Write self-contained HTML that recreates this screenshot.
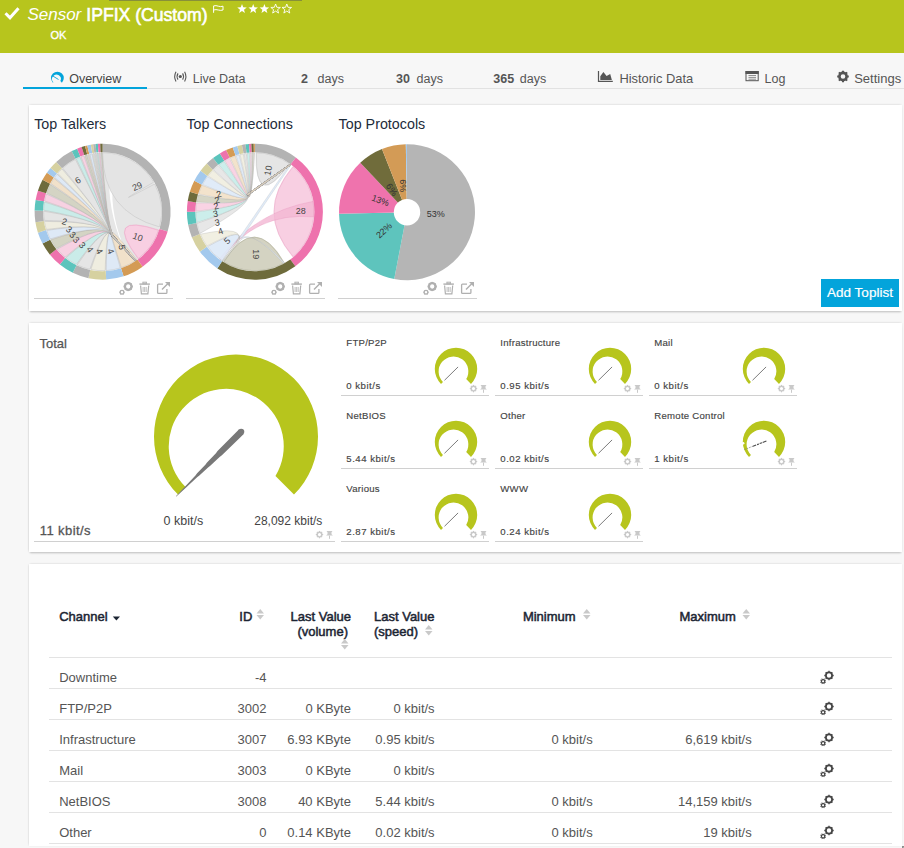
<!DOCTYPE html>
<html><head><meta charset="utf-8"><style>
html,body{margin:0;padding:0;}
body{width:904px;height:848px;overflow:hidden;position:relative;background:#f7f7f7;font-family:"Liberation Sans", sans-serif;}
.t{position:absolute;line-height:0;white-space:nowrap;}
svg{position:absolute;left:0;top:0;}
</style></head><body>
<div style="position:absolute;left:0px;top:0px;width:904px;height:53px;background:#b7c51d;"></div>
<div style="position:absolute;left:109px;top:0px;width:193px;height:1px;background:rgba(80,80,90,0.45);"></div>
<div class="t" style="left:27.40px;top:15.21px;font-size:17px;font-weight:normal;color:#fff;font-style:italic;">Sensor</div>
<div class="t" style="left:86.30px;top:15.00px;font-size:17.6px;font-weight:normal;color:#fff;font-style:normal;-webkit-text-stroke:0.6px #fff;">IPFIX (Custom)</div>
<div class="t" style="left:50.5px;top:35.4px;font-size:11px;color:#fff;-webkit-text-stroke:0.35px #fff;">OK</div>
<div style="position:absolute;left:23px;top:88px;width:881px;height:1px;background:#e2e2e2;"></div>
<div style="position:absolute;left:23px;top:87px;width:124px;height:2px;background:#03a4db;"></div>
<div class="t" style="left:69.20px;top:78.67px;font-size:12.5px;font-weight:normal;color:#444;font-style:normal;">Overview</div>
<div class="t" style="left:192.70px;top:78.67px;font-size:12.5px;font-weight:normal;color:#555;font-style:normal;">Live Data</div>
<div class="t" style="left:301.00px;top:78.67px;font-size:12.5px;font-weight:bold;color:#555;font-style:normal;">2</div>
<div class="t" style="left:317.50px;top:78.67px;font-size:12.5px;font-weight:normal;color:#555;font-style:normal;">days</div>
<div class="t" style="left:396.00px;top:78.67px;font-size:12.5px;font-weight:bold;color:#555;font-style:normal;">30</div>
<div class="t" style="left:416.50px;top:78.67px;font-size:12.5px;font-weight:normal;color:#555;font-style:normal;">days</div>
<div class="t" style="left:493.30px;top:78.67px;font-size:12.5px;font-weight:bold;color:#555;font-style:normal;">365</div>
<div class="t" style="left:519.80px;top:78.67px;font-size:12.5px;font-weight:normal;color:#555;font-style:normal;">days</div>
<div class="t" style="left:619.40px;top:78.53px;font-size:12.9px;font-weight:normal;color:#555;font-style:normal;">Historic Data</div>
<div class="t" style="left:764.60px;top:78.67px;font-size:12.5px;font-weight:normal;color:#555;font-style:normal;">Log</div>
<div class="t" style="left:854.20px;top:78.50px;font-size:13px;font-weight:normal;color:#555;font-style:normal;">Settings</div>
<div style="position:absolute;left:29px;top:105px;width:873px;height:206px;background:#fff;box-shadow:0 2px 2px -1px rgba(0,0,0,0.22), 0 -1px 2px -1px rgba(0,0,0,0.12), -1px 0 2px -1px rgba(0,0,0,0.15), 0 0 3px rgba(0,0,0,0.04);"></div>
<div style="position:absolute;left:29px;top:323px;width:873px;height:229px;background:#fff;box-shadow:0 2px 2px -1px rgba(0,0,0,0.22), 0 -1px 2px -1px rgba(0,0,0,0.12), -1px 0 2px -1px rgba(0,0,0,0.15), 0 0 3px rgba(0,0,0,0.04);"></div>
<div style="position:absolute;left:29px;top:564px;width:873px;height:282px;background:#fff;box-shadow:0 -1px 2px -1px rgba(0,0,0,0.12), -1px 0 2px -1px rgba(0,0,0,0.15), 0 0 2px rgba(0,0,0,0.03);"></div>
<div style="position:absolute;left:901.5px;top:845.5px;width:2px;height:2px;background:#6a6a6a;border-radius:1px;"></div>
<div style="position:absolute;left:903px;top:847px;width:1px;height:1px;background:#aaa;"></div>
<div class="t" style="left:34.20px;top:123.85px;font-size:14.3px;font-weight:normal;color:#1d2b3a;font-style:normal;">Top Talkers</div>
<div class="t" style="left:186.40px;top:123.85px;font-size:14.3px;font-weight:normal;color:#1d2b3a;font-style:normal;">Top Connections</div>
<div class="t" style="left:338.60px;top:123.85px;font-size:14.3px;font-weight:normal;color:#1d2b3a;font-style:normal;">Top Protocols</div>
<div style="position:absolute;left:34px;top:298px;width:139px;height:1px;background:#d0d0d0;"></div>
<div style="position:absolute;left:186px;top:298px;width:139px;height:1px;background:#d0d0d0;"></div>
<div style="position:absolute;left:338px;top:298px;width:139px;height:1px;background:#d0d0d0;"></div>
<div style="position:absolute;left:821px;top:279px;width:78px;height:28px;background:#03a4db;"></div>
<div class="t" style="left:560.00px;width:600px;text-align:center;top:292.82px;font-size:13.5px;font-weight:normal;color:#fff;font-style:normal;-webkit-text-stroke:0.2px #fff;">Add Toplist</div>
<div class="t" style="left:39.50px;top:343.70px;font-size:13px;font-weight:normal;color:#555;font-style:normal;-webkit-text-stroke:0.25px #555;">Total</div>
<div class="t" style="left:163.60px;top:521.17px;font-size:12.5px;font-weight:normal;color:#444;font-style:normal;">0 kbit/s</div>
<div class="t" style="left:-277.70px;width:600px;text-align:right;top:521.34px;font-size:12px;font-weight:normal;color:#444;font-style:normal;">28,092 kbit/s</div>
<div class="t" style="left:39.80px;top:530.50px;font-size:13px;font-weight:normal;color:#555;font-style:normal;letter-spacing:0.4px;-webkit-text-stroke:0.3px #555;">11 kbit/s</div>
<div style="position:absolute;left:34px;top:541px;width:301px;height:1px;background:#d0d0d0;"></div>
<div class="t" style="left:346.30px;top:342.67px;font-size:9.6px;font-weight:normal;color:#444;font-style:normal;letter-spacing:0.25px;-webkit-text-stroke:0.15px #444;">FTP/P2P</div>
<div class="t" style="left:346.30px;top:385.67px;font-size:9.6px;font-weight:normal;color:#444;font-style:normal;letter-spacing:0.5px;-webkit-text-stroke:0.15px #444;">0 kbit/s</div>
<div style="position:absolute;left:341px;top:395px;width:148px;height:1px;background:#d0d0d0;"></div>
<div class="t" style="left:500.30px;top:342.67px;font-size:9.6px;font-weight:normal;color:#444;font-style:normal;letter-spacing:0.25px;-webkit-text-stroke:0.15px #444;">Infrastructure</div>
<div class="t" style="left:500.30px;top:385.67px;font-size:9.6px;font-weight:normal;color:#444;font-style:normal;letter-spacing:0.5px;-webkit-text-stroke:0.15px #444;">0.95 kbit/s</div>
<div style="position:absolute;left:495px;top:395px;width:148px;height:1px;background:#d0d0d0;"></div>
<div class="t" style="left:654.30px;top:342.67px;font-size:9.6px;font-weight:normal;color:#444;font-style:normal;letter-spacing:0.25px;-webkit-text-stroke:0.15px #444;">Mail</div>
<div class="t" style="left:654.30px;top:385.67px;font-size:9.6px;font-weight:normal;color:#444;font-style:normal;letter-spacing:0.5px;-webkit-text-stroke:0.15px #444;">0 kbit/s</div>
<div style="position:absolute;left:649px;top:395px;width:148px;height:1px;background:#d0d0d0;"></div>
<div class="t" style="left:346.30px;top:415.67px;font-size:9.6px;font-weight:normal;color:#444;font-style:normal;letter-spacing:0.25px;-webkit-text-stroke:0.15px #444;">NetBIOS</div>
<div class="t" style="left:346.30px;top:458.67px;font-size:9.6px;font-weight:normal;color:#444;font-style:normal;letter-spacing:0.5px;-webkit-text-stroke:0.15px #444;">5.44 kbit/s</div>
<div style="position:absolute;left:341px;top:468px;width:148px;height:1px;background:#d0d0d0;"></div>
<div class="t" style="left:500.30px;top:415.67px;font-size:9.6px;font-weight:normal;color:#444;font-style:normal;letter-spacing:0.25px;-webkit-text-stroke:0.15px #444;">Other</div>
<div class="t" style="left:500.30px;top:458.67px;font-size:9.6px;font-weight:normal;color:#444;font-style:normal;letter-spacing:0.5px;-webkit-text-stroke:0.15px #444;">0.02 kbit/s</div>
<div style="position:absolute;left:495px;top:468px;width:148px;height:1px;background:#d0d0d0;"></div>
<div class="t" style="left:654.30px;top:415.67px;font-size:9.6px;font-weight:normal;color:#444;font-style:normal;letter-spacing:0.25px;-webkit-text-stroke:0.15px #444;">Remote Control</div>
<div class="t" style="left:654.30px;top:458.67px;font-size:9.6px;font-weight:normal;color:#444;font-style:normal;letter-spacing:0.5px;-webkit-text-stroke:0.15px #444;">1 kbit/s</div>
<div style="position:absolute;left:649px;top:468px;width:148px;height:1px;background:#d0d0d0;"></div>
<div class="t" style="left:346.30px;top:488.67px;font-size:9.6px;font-weight:normal;color:#444;font-style:normal;letter-spacing:0.25px;-webkit-text-stroke:0.15px #444;">Various</div>
<div class="t" style="left:346.30px;top:531.67px;font-size:9.6px;font-weight:normal;color:#444;font-style:normal;letter-spacing:0.5px;-webkit-text-stroke:0.15px #444;">2.87 kbit/s</div>
<div style="position:absolute;left:341px;top:541px;width:148px;height:1px;background:#d0d0d0;"></div>
<div class="t" style="left:500.30px;top:488.67px;font-size:9.6px;font-weight:normal;color:#444;font-style:normal;letter-spacing:0.25px;-webkit-text-stroke:0.15px #444;">WWW</div>
<div class="t" style="left:500.30px;top:531.67px;font-size:9.6px;font-weight:normal;color:#444;font-style:normal;letter-spacing:0.5px;-webkit-text-stroke:0.15px #444;">0.24 kbit/s</div>
<div style="position:absolute;left:495px;top:541px;width:148px;height:1px;background:#d0d0d0;"></div>
<div class="t" style="left:59.20px;top:616.90px;font-size:13px;font-weight:normal;color:#1c2533;font-style:normal;-webkit-text-stroke:0.5px #1c2533;">Channel</div>
<div class="t" style="left:239.30px;top:616.90px;font-size:13px;font-weight:normal;color:#1c2533;font-style:normal;-webkit-text-stroke:0.5px #1c2533;">ID</div>
<div class="t" style="left:-249.00px;width:600px;text-align:right;top:616.90px;font-size:13px;font-weight:normal;color:#1c2533;font-style:normal;-webkit-text-stroke:0.5px #1c2533;">Last Value</div>
<div class="t" style="left:-252.00px;width:600px;text-align:right;top:631.50px;font-size:13px;font-weight:normal;color:#1c2533;font-style:normal;-webkit-text-stroke:0.5px #1c2533;">(volume)</div>
<div class="t" style="left:374.00px;top:616.90px;font-size:13px;font-weight:normal;color:#1c2533;font-style:normal;-webkit-text-stroke:0.5px #1c2533;">Last Value</div>
<div class="t" style="left:374.00px;top:631.50px;font-size:13px;font-weight:normal;color:#1c2533;font-style:normal;-webkit-text-stroke:0.5px #1c2533;">(speed)</div>
<div class="t" style="left:522.90px;top:616.90px;font-size:13px;font-weight:normal;color:#1c2533;font-style:normal;-webkit-text-stroke:0.5px #1c2533;">Minimum</div>
<div class="t" style="left:679.50px;top:616.90px;font-size:13px;font-weight:normal;color:#1c2533;font-style:normal;-webkit-text-stroke:0.5px #1c2533;">Maximum</div>
<div style="position:absolute;left:49px;top:657px;width:843px;height:1px;background:#e3e3e3;"></div>
<div style="position:absolute;left:49px;top:688px;width:843px;height:1px;background:#e3e3e3;"></div>
<div style="position:absolute;left:49px;top:719px;width:843px;height:1px;background:#e3e3e3;"></div>
<div style="position:absolute;left:49px;top:750px;width:843px;height:1px;background:#e3e3e3;"></div>
<div style="position:absolute;left:49px;top:781px;width:843px;height:1px;background:#e3e3e3;"></div>
<div style="position:absolute;left:49px;top:812px;width:843px;height:1px;background:#e3e3e3;"></div>
<div style="position:absolute;left:49px;top:843px;width:843px;height:1px;background:#e3e3e3;"></div>
<div class="t" style="left:59.20px;top:677.70px;font-size:13px;font-weight:normal;color:#555;font-style:normal;">Downtime</div>
<div class="t" style="left:-333.50px;width:600px;text-align:right;top:677.70px;font-size:13px;font-weight:normal;color:#555;font-style:normal;">-4</div>
<div class="t" style="left:59.20px;top:708.70px;font-size:13px;font-weight:normal;color:#555;font-style:normal;">FTP/P2P</div>
<div class="t" style="left:-333.50px;width:600px;text-align:right;top:708.70px;font-size:13px;font-weight:normal;color:#555;font-style:normal;">3002</div>
<div class="t" style="left:-249.10px;width:600px;text-align:right;top:708.70px;font-size:13px;font-weight:normal;color:#555;font-style:normal;">0 KByte</div>
<div class="t" style="left:-165.40px;width:600px;text-align:right;top:708.70px;font-size:13px;font-weight:normal;color:#555;font-style:normal;">0 kbit/s</div>
<div class="t" style="left:59.20px;top:739.70px;font-size:13px;font-weight:normal;color:#555;font-style:normal;">Infrastructure</div>
<div class="t" style="left:-333.50px;width:600px;text-align:right;top:739.70px;font-size:13px;font-weight:normal;color:#555;font-style:normal;">3007</div>
<div class="t" style="left:-249.10px;width:600px;text-align:right;top:739.70px;font-size:13px;font-weight:normal;color:#555;font-style:normal;">6.93 KByte</div>
<div class="t" style="left:-165.40px;width:600px;text-align:right;top:739.70px;font-size:13px;font-weight:normal;color:#555;font-style:normal;">0.95 kbit/s</div>
<div class="t" style="left:-7.30px;width:600px;text-align:right;top:739.70px;font-size:13px;font-weight:normal;color:#555;font-style:normal;">0 kbit/s</div>
<div class="t" style="left:151.70px;width:600px;text-align:right;top:739.70px;font-size:13px;font-weight:normal;color:#555;font-style:normal;">6,619 kbit/s</div>
<div class="t" style="left:59.20px;top:770.70px;font-size:13px;font-weight:normal;color:#555;font-style:normal;">Mail</div>
<div class="t" style="left:-333.50px;width:600px;text-align:right;top:770.70px;font-size:13px;font-weight:normal;color:#555;font-style:normal;">3003</div>
<div class="t" style="left:-249.10px;width:600px;text-align:right;top:770.70px;font-size:13px;font-weight:normal;color:#555;font-style:normal;">0 KByte</div>
<div class="t" style="left:-165.40px;width:600px;text-align:right;top:770.70px;font-size:13px;font-weight:normal;color:#555;font-style:normal;">0 kbit/s</div>
<div class="t" style="left:59.20px;top:801.70px;font-size:13px;font-weight:normal;color:#555;font-style:normal;">NetBIOS</div>
<div class="t" style="left:-333.50px;width:600px;text-align:right;top:801.70px;font-size:13px;font-weight:normal;color:#555;font-style:normal;">3008</div>
<div class="t" style="left:-249.10px;width:600px;text-align:right;top:801.70px;font-size:13px;font-weight:normal;color:#555;font-style:normal;">40 KByte</div>
<div class="t" style="left:-165.40px;width:600px;text-align:right;top:801.70px;font-size:13px;font-weight:normal;color:#555;font-style:normal;">5.44 kbit/s</div>
<div class="t" style="left:-7.30px;width:600px;text-align:right;top:801.70px;font-size:13px;font-weight:normal;color:#555;font-style:normal;">0 kbit/s</div>
<div class="t" style="left:151.70px;width:600px;text-align:right;top:801.70px;font-size:13px;font-weight:normal;color:#555;font-style:normal;">14,159 kbit/s</div>
<div class="t" style="left:59.20px;top:832.70px;font-size:13px;font-weight:normal;color:#555;font-style:normal;">Other</div>
<div class="t" style="left:-333.50px;width:600px;text-align:right;top:832.70px;font-size:13px;font-weight:normal;color:#555;font-style:normal;">0</div>
<div class="t" style="left:-249.10px;width:600px;text-align:right;top:832.70px;font-size:13px;font-weight:normal;color:#555;font-style:normal;">0.14 KByte</div>
<div class="t" style="left:-165.40px;width:600px;text-align:right;top:832.70px;font-size:13px;font-weight:normal;color:#555;font-style:normal;">0.02 kbit/s</div>
<div class="t" style="left:-7.30px;width:600px;text-align:right;top:832.70px;font-size:13px;font-weight:normal;color:#555;font-style:normal;">0 kbit/s</div>
<div class="t" style="left:151.70px;width:600px;text-align:right;top:832.70px;font-size:13px;font-weight:normal;color:#555;font-style:normal;">19 kbit/s</div>
<svg width="904" height="848" viewBox="0 0 904 848">
<polyline points="5.5,13.2 10,17.8 18.5,8.3" fill="none" stroke="#fff" stroke-width="3"/>
<path d="M213.6,12.8 L213.6,5.9 Q216,5.2 218.3,6.2 Q220.6,7 223,6.2 L223,10 Q220.6,10.8 218.3,10 Q216,9.2 213.6,10" fill="none" stroke="#fff" stroke-width="1"/>
<polygon points="242.00,4.00 243.23,7.30 246.76,7.45 244.00,9.65 244.94,13.05 242.00,11.10 239.06,13.05 240.00,9.65 237.24,7.45 240.77,7.30" fill="#fff"/>
<polygon points="253.20,4.00 254.43,7.30 257.96,7.45 255.20,9.65 256.14,13.05 253.20,11.10 250.26,13.05 251.20,9.65 248.44,7.45 251.97,7.30" fill="#fff"/>
<polygon points="264.40,4.00 265.63,7.30 269.16,7.45 266.40,9.65 267.34,13.05 264.40,11.10 261.46,13.05 262.40,9.65 259.64,7.45 263.17,7.30" fill="#fff"/>
<polygon points="275.60,4.00 276.83,7.30 280.36,7.45 277.60,9.65 278.54,13.05 275.60,11.10 272.66,13.05 273.60,9.65 270.84,7.45 274.37,7.30" fill="none" stroke="#fff" stroke-width="0.9"/>
<polygon points="286.80,4.00 288.03,7.30 291.56,7.45 288.80,9.65 289.74,13.05 286.80,11.10 283.86,13.05 284.80,9.65 282.04,7.45 285.57,7.30" fill="none" stroke="#fff" stroke-width="0.9"/>
<path d="M52.87,82.63 A6.4,6.4 0 1 1 61.93,82.63 L60.36,81.06 A4.4,4.4 0 1 0 53.34,82.16 Z" fill="#03a4db"/>
<line x1="53" y1="76.1" x2="58.5" y2="79.5" stroke="#03a4db" stroke-width="0.9"/>
<circle cx="180.3" cy="76.5" r="1.6" fill="#555"/>
<path d="M176,71.8 Q173.4,76.6 176,81.4 M178,73.4 Q176.1,76.5 178,79.6 M184.6,71.8 Q187.2,76.6 184.6,81.4 M182.6,73.4 Q184.5,76.5 182.6,79.6" fill="none" stroke="#555" stroke-width="1.1"/>
<path d="M598.5,71 L598.5,81.3 L612.8,81.3" fill="none" stroke="#555" stroke-width="1.2"/>
<path d="M600.3,80 L600.3,76.2 L603.4,72 L606.6,76.1 L610.2,74 L611.8,79.7 L611.8,80 Z" fill="#555"/>
<rect x="746" y="71.5" width="12.2" height="9.2" fill="none" stroke="#555" stroke-width="1"/>
<rect x="745.5" y="71" width="13.2" height="3" fill="#555"/>
<path d="M748.5,75.5 H756 M748.5,77.4 H756 M748.5,79.2 H756" stroke="#777" stroke-width="0.8"/>
<circle cx="843" cy="76.5" r="3.6" fill="none" stroke="#555" stroke-width="2.6"/>
<line x1="846.50" y1="76.50" x2="848.80" y2="76.50" stroke="#555" stroke-width="2"/>
<line x1="845.47" y1="78.97" x2="847.10" y2="80.60" stroke="#555" stroke-width="2"/>
<line x1="843.00" y1="80.00" x2="843.00" y2="82.30" stroke="#555" stroke-width="2"/>
<line x1="840.53" y1="78.97" x2="838.90" y2="80.60" stroke="#555" stroke-width="2"/>
<line x1="839.50" y1="76.50" x2="837.20" y2="76.50" stroke="#555" stroke-width="2"/>
<line x1="840.53" y1="74.03" x2="838.90" y2="72.40" stroke="#555" stroke-width="2"/>
<line x1="843.00" y1="73.00" x2="843.00" y2="70.70" stroke="#555" stroke-width="2"/>
<line x1="845.47" y1="74.03" x2="847.10" y2="72.40" stroke="#555" stroke-width="2"/>
<circle cx="102.6" cy="211.7" r="59" fill="#e6e6e6"/>
<path d="M110.81,153.27 A59,59 0 0 1 116.87,154.45 Q102.6,211.7 132.10,262.80 A59,59 0 0 1 131.20,263.30 Q102.6,211.7 110.81,153.27 Z" fill="#ffffff" fill-opacity="1" stroke="#ffffff" stroke-width="0" stroke-opacity="0.6"/>
<path d="M102.60,152.70 A59,59 0 0 1 153.70,182.20 Q102.6,211.7 154.69,184.00 A59,59 0 0 1 159.59,226.97 Q102.6,211.7 102.60,152.70 Z" fill="#e4e4e4" fill-opacity="1" stroke="#aaaaaa" stroke-width="0.5" stroke-opacity="0.6"/>
<path d="M158.71,229.93 A59,59 0 0 1 138.11,258.82 Q102.6,211.7 158.55,230.42 A59,59 0 0 1 138.52,258.51 Q102.6,211.7 158.71,229.93 Z" fill="#f8cfe2" fill-opacity="1" stroke="#e89bbf" stroke-width="0.5" stroke-opacity="0.6"/>
<path d="M136.86,259.73 A59,59 0 0 1 121.32,267.65 Q106.60,221.46 113.04,235.69 L135.85,260.37 L135.33,260.86 L112.16,236.51 Q106.60,221.46 136.86,259.73 Z" fill="#f2e1c8" fill-opacity="0.92" stroke="#8a8a8a" stroke-width="0.4" stroke-opacity="0.55"/>
<path d="M120.34,267.97 A59,59 0 0 1 106.20,270.59 Q106.60,221.46 113.04,235.69 L135.85,260.37 L135.33,260.86 L112.16,236.51 Q106.60,221.46 120.34,267.97 Z" fill="#dde9f7" fill-opacity="0.92" stroke="#8a8a8a" stroke-width="0.4" stroke-opacity="0.55"/>
<path d="M105.17,270.64 A59,59 0 0 1 90.84,269.52 Q106.60,221.46 113.04,235.69 L135.85,260.37 L135.33,260.86 L112.16,236.51 Q106.60,221.46 105.17,270.64 Z" fill="#f0eedf" fill-opacity="0.92" stroke="#8a8a8a" stroke-width="0.4" stroke-opacity="0.55"/>
<path d="M89.83,269.30 A59,59 0 0 1 77.20,264.95 Q106.60,221.46 113.04,235.69 L135.85,260.37 L135.33,260.86 L112.16,236.51 Q106.60,221.46 89.83,269.30 Z" fill="#e5e5e5" fill-opacity="0.92" stroke="#8a8a8a" stroke-width="0.4" stroke-opacity="0.55"/>
<path d="M76.27,264.50 A59,59 0 0 1 65.87,257.87 Q106.60,221.46 113.04,235.69 L135.85,260.37 L135.33,260.86 L112.16,236.51 Q106.60,221.46 76.27,264.50 Z" fill="#c8ede9" fill-opacity="0.92" stroke="#8a8a8a" stroke-width="0.4" stroke-opacity="0.55"/>
<path d="M65.07,257.23 A59,59 0 0 1 57.07,249.23 Q106.60,221.46 113.04,235.69 L135.85,260.37 L135.33,260.86 L112.16,236.51 Q106.60,221.46 65.07,257.23 Z" fill="#f8cfe2" fill-opacity="0.92" stroke="#8a8a8a" stroke-width="0.4" stroke-opacity="0.55"/>
<path d="M56.43,248.43 A59,59 0 0 1 50.75,239.85 Q106.60,221.46 113.04,235.69 L135.85,260.37 L135.33,260.86 L112.16,236.51 Q106.60,221.46 56.43,248.43 Z" fill="#d3d2c1" fill-opacity="0.92" stroke="#8a8a8a" stroke-width="0.4" stroke-opacity="0.55"/>
<path d="M50.27,238.94 A59,59 0 0 1 46.65,230.42 Q106.60,221.46 113.04,235.69 L135.85,260.37 L135.33,260.86 L112.16,236.51 Q106.60,221.46 50.27,238.94 Z" fill="#dde9f7" fill-opacity="0.92" stroke="#8a8a8a" stroke-width="0.4" stroke-opacity="0.55"/>
<path d="M46.33,229.44 A59,59 0 0 1 44.41,221.44 Q106.60,221.46 113.04,235.69 L135.85,260.37 L135.33,260.86 L112.16,236.51 Q106.60,221.46 46.33,229.44 Z" fill="#f0eedf" fill-opacity="0.92" stroke="#8a8a8a" stroke-width="0.4" stroke-opacity="0.55"/>
<path d="M44.25,220.42 A59,59 0 0 1 43.60,211.19 Q106.60,221.46 113.04,235.69 L135.85,260.37 L135.33,260.86 L112.16,236.51 Q106.60,221.46 44.25,220.42 Z" fill="#e5e5e5" fill-opacity="0.92" stroke="#8a8a8a" stroke-width="0.4" stroke-opacity="0.55"/>
<path d="M43.62,210.16 A59,59 0 0 1 44.41,201.96 Q106.60,221.46 113.04,235.69 L135.85,260.37 L135.33,260.86 L112.16,236.51 Q106.60,221.46 43.62,210.16 Z" fill="#c8ede9" fill-opacity="0.92" stroke="#8a8a8a" stroke-width="0.4" stroke-opacity="0.55"/>
<path d="M44.59,200.95 A59,59 0 0 1 46.33,193.96 Q106.60,221.46 113.04,235.69 L135.85,260.37 L135.33,260.86 L112.16,236.51 Q106.60,221.46 44.59,200.95 Z" fill="#f8cfe2" fill-opacity="0.92" stroke="#8a8a8a" stroke-width="0.4" stroke-opacity="0.55"/>
<path d="M46.65,192.98 A59,59 0 0 1 50.27,184.46 Q106.60,221.46 113.04,235.69 L135.85,260.37 L135.33,260.86 L112.16,236.51 Q106.60,221.46 46.65,192.98 Z" fill="#d3d2c1" fill-opacity="0.92" stroke="#8a8a8a" stroke-width="0.4" stroke-opacity="0.55"/>
<path d="M50.75,183.55 A59,59 0 0 1 53.98,178.28 Q106.60,221.46 113.04,235.69 L135.85,260.37 L135.33,260.86 L112.16,236.51 Q106.60,221.46 50.75,183.55 Z" fill="#f2e1c8" fill-opacity="0.92" stroke="#8a8a8a" stroke-width="0.4" stroke-opacity="0.55"/>
<path d="M54.57,177.44 A59,59 0 0 1 57.07,174.17 Q106.60,221.46 113.04,235.69 L135.85,260.37 L135.33,260.86 L112.16,236.51 Q106.60,221.46 54.57,177.44 Z" fill="#dde9f7" fill-opacity="0.92" stroke="#8a8a8a" stroke-width="0.4" stroke-opacity="0.55"/>
<path d="M57.74,173.38 A59,59 0 0 1 61.99,168.90 Q106.60,221.46 113.04,235.69 L135.85,260.37 L135.33,260.86 L112.16,236.51 Q106.60,221.46 57.74,173.38 Z" fill="#f0eedf" fill-opacity="0.92" stroke="#8a8a8a" stroke-width="0.4" stroke-opacity="0.55"/>
<path d="M62.74,168.20 A59,59 0 0 1 75.36,159.37 Q106.60,221.46 113.04,235.69 L135.85,260.37 L135.33,260.86 L112.16,236.51 Q106.60,221.46 62.74,168.20 Z" fill="#e5e5e5" fill-opacity="0.92" stroke="#8a8a8a" stroke-width="0.4" stroke-opacity="0.55"/>
<path d="M76.27,158.90 A59,59 0 0 1 80.02,157.19 Q106.60,221.46 113.04,235.69 L135.85,260.37 L135.33,260.86 L112.16,236.51 Q106.60,221.46 76.27,158.90 Z" fill="#c8ede9" fill-opacity="0.92" stroke="#8a8a8a" stroke-width="0.4" stroke-opacity="0.55"/>
<path d="M80.98,156.81 A59,59 0 0 1 83.88,155.75 Q106.60,221.46 113.04,235.69 L135.85,260.37 L135.33,260.86 L112.16,236.51 Q106.60,221.46 80.98,156.81 Z" fill="#f8cfe2" fill-opacity="0.92" stroke="#8a8a8a" stroke-width="0.4" stroke-opacity="0.55"/>
<path d="M84.86,155.43 A59,59 0 0 1 86.83,154.85 Q106.60,221.46 113.04,235.69 L135.85,260.37 L135.33,260.86 L112.16,236.51 Q106.60,221.46 84.86,155.43 Z" fill="#d3d2c1" fill-opacity="0.92" stroke="#8a8a8a" stroke-width="0.4" stroke-opacity="0.55"/>
<path d="M87.83,154.58 A59,59 0 0 1 88.83,154.33 Q106.60,221.46 113.04,235.69 L135.85,260.37 L135.33,260.86 L112.16,236.51 Q106.60,221.46 87.83,154.58 Z" fill="#f2e1c8" fill-opacity="0.92" stroke="#8a8a8a" stroke-width="0.4" stroke-opacity="0.55"/>
<path d="M89.83,154.10 A59,59 0 0 1 91.85,153.69 Q106.60,221.46 113.04,235.69 L135.85,260.37 L135.33,260.86 L112.16,236.51 Q106.60,221.46 89.83,154.10 Z" fill="#dde9f7" fill-opacity="0.92" stroke="#8a8a8a" stroke-width="0.4" stroke-opacity="0.55"/>
<path d="M92.86,153.51 A59,59 0 0 1 93.88,153.35 Q106.60,221.46 113.04,235.69 L135.85,260.37 L135.33,260.86 L112.16,236.51 Q106.60,221.46 92.86,153.51 Z" fill="#f0eedf" fill-opacity="0.92" stroke="#8a8a8a" stroke-width="0.4" stroke-opacity="0.55"/>
<path d="M94.90,153.20 A59,59 0 0 1 95.92,153.08 Q106.60,221.46 113.04,235.69 L135.85,260.37 L135.33,260.86 L112.16,236.51 Q106.60,221.46 94.90,153.20 Z" fill="#e5e5e5" fill-opacity="0.92" stroke="#8a8a8a" stroke-width="0.4" stroke-opacity="0.55"/>
<path d="M96.95,152.97 A59,59 0 0 1 97.97,152.88 Q106.60,221.46 113.04,235.69 L135.85,260.37 L135.33,260.86 L112.16,236.51 Q106.60,221.46 96.95,152.97 Z" fill="#c8ede9" fill-opacity="0.92" stroke="#8a8a8a" stroke-width="0.4" stroke-opacity="0.55"/>
<path d="M99.00,152.81 A59,59 0 0 1 100.03,152.76 Q106.60,221.46 113.04,235.69 L135.85,260.37 L135.33,260.86 L112.16,236.51 Q106.60,221.46 99.00,152.81 Z" fill="#f8cfe2" fill-opacity="0.92" stroke="#8a8a8a" stroke-width="0.4" stroke-opacity="0.55"/>
<path d="M101.06,152.72 A59,59 0 0 1 102.09,152.70 Q106.60,221.46 113.04,235.69 L135.85,260.37 L135.33,260.86 L112.16,236.51 Q106.60,221.46 101.06,152.72 Z" fill="#d3d2c1" fill-opacity="0.92" stroke="#8a8a8a" stroke-width="0.4" stroke-opacity="0.55"/>
<path d="M102.60,143.70 A68,68 0 0 1 167.63,231.58 L159.50,229.10 A59.5,59.5 0 0 0 102.60,152.20 Z" fill="#b3b3b3"/>
<path d="M167.63,231.58 A68,68 0 0 1 142.57,266.71 L137.57,259.84 A59.5,59.5 0 0 0 159.50,229.10 Z" fill="#ee72ad"/>
<path d="M142.57,266.71 A68,68 0 0 1 123.61,276.37 L120.99,268.29 A59.5,59.5 0 0 0 137.57,259.84 Z" fill="#d49b55"/>
<path d="M123.61,276.37 A68,68 0 0 1 106.16,279.61 L105.71,271.12 A59.5,59.5 0 0 0 120.99,268.29 Z" fill="#a3c9ed"/>
<path d="M106.16,279.61 A68,68 0 0 1 88.46,278.21 L90.23,269.90 A59.5,59.5 0 0 0 105.71,271.12 Z" fill="#d6d1a0"/>
<path d="M88.46,278.21 A68,68 0 0 1 72.79,272.82 L76.52,265.18 A59.5,59.5 0 0 0 90.23,269.90 Z" fill="#b3b3b3"/>
<path d="M72.79,272.82 A68,68 0 0 1 59.81,264.55 L65.16,257.94 A59.5,59.5 0 0 0 76.52,265.18 Z" fill="#5bc4bc"/>
<path d="M59.81,264.55 A68,68 0 0 1 49.75,254.49 L56.36,249.14 A59.5,59.5 0 0 0 65.16,257.94 Z" fill="#ee72ad"/>
<path d="M49.75,254.49 A68,68 0 0 1 42.56,243.62 L50.06,239.63 A59.5,59.5 0 0 0 56.36,249.14 Z" fill="#6e6b3b"/>
<path d="M42.56,243.62 A68,68 0 0 1 37.93,232.71 L46.01,230.09 A59.5,59.5 0 0 0 50.06,239.63 Z" fill="#a3c9ed"/>
<path d="M37.93,232.71 A68,68 0 0 1 35.44,222.34 L43.83,221.01 A59.5,59.5 0 0 0 46.01,230.09 Z" fill="#d6d1a0"/>
<path d="M35.44,222.34 A68,68 0 0 1 34.61,210.51 L43.11,210.66 A59.5,59.5 0 0 0 43.83,221.01 Z" fill="#b3b3b3"/>
<path d="M34.61,210.51 A68,68 0 0 1 35.63,199.89 L44.00,201.37 A59.5,59.5 0 0 0 43.11,210.66 Z" fill="#5bc4bc"/>
<path d="M35.63,199.89 A68,68 0 0 1 37.93,190.69 L46.01,193.31 A59.5,59.5 0 0 0 44.00,201.37 Z" fill="#ee72ad"/>
<path d="M37.93,190.69 A68,68 0 0 1 42.56,179.78 L50.06,183.77 A59.5,59.5 0 0 0 46.01,193.31 Z" fill="#6e6b3b"/>
<path d="M42.56,179.78 A68,68 0 0 1 46.90,172.70 L53.86,177.57 A59.5,59.5 0 0 0 50.06,183.77 Z" fill="#d49b55"/>
<path d="M46.90,172.70 A68,68 0 0 1 50.51,167.99 L57.02,173.45 A59.5,59.5 0 0 0 53.86,177.57 Z" fill="#a3c9ed"/>
<path d="M50.51,167.99 A68,68 0 0 1 56.22,161.97 L62.02,168.18 A59.5,59.5 0 0 0 57.02,173.45 Z" fill="#d6d1a0"/>
<path d="M56.22,161.97 A68,68 0 0 1 71.73,151.11 L75.59,158.69 A59.5,59.5 0 0 0 62.02,168.18 Z" fill="#b3b3b3"/>
<path d="M71.73,151.11 A68,68 0 0 1 77.13,148.65 L80.31,156.53 A59.5,59.5 0 0 0 75.59,158.69 Z" fill="#5bc4bc"/>
<path d="M77.13,148.65 A68,68 0 0 1 81.59,147.03 L84.21,155.11 A59.5,59.5 0 0 0 80.31,156.53 Z" fill="#ee72ad"/>
<path d="M81.59,147.03 A68,68 0 0 1 85.00,146.02 L87.20,154.23 A59.5,59.5 0 0 0 84.21,155.11 Z" fill="#6e6b3b"/>
<path d="M85.00,146.02 A68,68 0 0 1 87.30,145.44 L89.22,153.72 A59.5,59.5 0 0 0 87.20,154.23 Z" fill="#d49b55"/>
<path d="M87.30,145.44 A68,68 0 0 1 90.79,144.73 L92.27,153.10 A59.5,59.5 0 0 0 89.22,153.72 Z" fill="#a3c9ed"/>
<path d="M90.79,144.73 A68,68 0 0 1 93.14,144.36 L94.32,152.78 A59.5,59.5 0 0 0 92.27,153.10 Z" fill="#d6d1a0"/>
<path d="M93.14,144.36 A68,68 0 0 1 95.49,144.07 L96.38,152.53 A59.5,59.5 0 0 0 94.32,152.78 Z" fill="#b3b3b3"/>
<path d="M95.49,144.07 A68,68 0 0 1 97.86,143.87 L98.45,152.34 A59.5,59.5 0 0 0 96.38,152.53 Z" fill="#5bc4bc"/>
<path d="M97.86,143.87 A68,68 0 0 1 100.23,143.74 L100.52,152.24 A59.5,59.5 0 0 0 98.45,152.34 Z" fill="#ee72ad"/>
<path d="M100.23,143.74 A68,68 0 0 1 102.60,143.70 L102.60,152.20 A59.5,59.5 0 0 0 100.52,152.24 Z" fill="#6e6b3b"/>
<text x="137.6" y="187.1" transform="rotate(-25 137.6 187.1)" font-size="9" fill="#444" text-anchor="middle" dominant-baseline="middle" font-family='"Liberation Sans", sans-serif'>29</text>
<text x="137.6" y="237.8" transform="rotate(20 137.6 237.8)" font-size="9" fill="#444" text-anchor="middle" dominant-baseline="middle" font-family='"Liberation Sans", sans-serif'>10</text>
<text x="78.2" y="181.0" transform="rotate(-30 78.2 181.0)" font-size="9" fill="#444" text-anchor="middle" dominant-baseline="middle" font-family='"Liberation Sans", sans-serif'>6</text>
<text x="64.4" y="222.3" transform="rotate(15 64.4 222.3)" font-size="9" fill="#444" text-anchor="middle" dominant-baseline="middle" font-family='"Liberation Sans", sans-serif'>2</text>
<text x="68.7" y="230.1" transform="rotate(35 68.7 230.1)" font-size="9" fill="#444" text-anchor="middle" dominant-baseline="middle" font-family='"Liberation Sans", sans-serif'>3</text>
<text x="72.2" y="235.2" transform="rotate(40 72.2 235.2)" font-size="9" fill="#444" text-anchor="middle" dominant-baseline="middle" font-family='"Liberation Sans", sans-serif'>3</text>
<text x="75.6" y="240.4" transform="rotate(45 75.6 240.4)" font-size="9" fill="#444" text-anchor="middle" dominant-baseline="middle" font-family='"Liberation Sans", sans-serif'>3</text>
<text x="81.6" y="245.6" transform="rotate(50 81.6 245.6)" font-size="9" fill="#444" text-anchor="middle" dominant-baseline="middle" font-family='"Liberation Sans", sans-serif'>3</text>
<text x="89.4" y="249.9" transform="rotate(55 89.4 249.9)" font-size="9" fill="#444" text-anchor="middle" dominant-baseline="middle" font-family='"Liberation Sans", sans-serif'>4</text>
<text x="98.8" y="251.6" transform="rotate(62 98.8 251.6)" font-size="9" fill="#444" text-anchor="middle" dominant-baseline="middle" font-family='"Liberation Sans", sans-serif'>4</text>
<text x="110.0" y="251.6" transform="rotate(70 110.0 251.6)" font-size="9" fill="#444" text-anchor="middle" dominant-baseline="middle" font-family='"Liberation Sans", sans-serif'>4</text>
<text x="121.2" y="247.3" transform="rotate(80 121.2 247.3)" font-size="9" fill="#444" text-anchor="middle" dominant-baseline="middle" font-family='"Liberation Sans", sans-serif'>5</text>
<circle cx="254.9" cy="211.7" r="59" fill="#ffffff"/>
<path d="M255.93,152.71 A59,59 0 0 1 289.58,163.97 Q254.9,211.7 256.44,152.72 A59,59 0 0 1 289.16,163.67 Q254.9,211.7 255.93,152.71 Z" fill="#e5e5e5" fill-opacity="1" stroke="#bbbbbb" stroke-width="0.5" stroke-opacity="0.6"/>
<path d="M292.82,166.50 A59,59 0 0 1 292.82,256.90 Q254.9,211.7 293.22,166.84 A59,59 0 0 1 293.22,256.56 Q254.9,211.7 292.82,166.50 Z" fill="#f8cfe2" fill-opacity="1" stroke="#e7a0c2" stroke-width="0.5" stroke-opacity="0.6"/>
<path d="M313.00,201.45 A59,59 0 0 1 313.68,216.84 Q254.9,211.7 221.06,260.03 A59,59 0 0 1 219.39,258.82 Q254.9,211.7 313.00,201.45 Z" fill="#f3b6d3" fill-opacity="0.8" stroke="#e58ab5" stroke-width="0.5" stroke-opacity="0.6"/>
<path d="M284.40,262.80 A59,59 0 0 1 223.63,261.73 Q254.9,211.7 283.95,263.05 A59,59 0 0 1 224.07,262.01 Q254.9,211.7 284.40,262.80 Z" fill="#d4d3c2" fill-opacity="1" stroke="#a9a88f" stroke-width="0.5" stroke-opacity="0.6"/>
<path d="M284.40,262.80 A59,59 0 0 1 283.50,263.30 Q247.78,224.22 236.11,242.33 L289.81,164.18 L291.00,164.99 L238.09,243.67 Q247.78,224.22 284.40,262.80 Z" fill="#dde9f7" fill-opacity="0.9" stroke="#aaaaaa" stroke-width="0.4" stroke-opacity="0.55"/>
<path d="M221.99,260.67 A59,59 0 0 1 207.41,246.71 Q247.78,224.22 237.57,243.37 L223.05,261.40 L222.48,260.96 L236.63,242.63 Q247.78,224.22 221.99,260.67 Z" fill="#dde9f7" fill-opacity="0.92" stroke="#8a8a8a" stroke-width="0.4" stroke-opacity="0.55"/>
<path d="M206.93,246.05 A59,59 0 0 1 200.35,234.18 Q247.78,224.22 237.57,243.37 L223.05,261.40 L222.48,260.96 L236.63,242.63 Q247.78,224.22 206.93,246.05 Z" fill="#f0eedf" fill-opacity="0.92" stroke="#8a8a8a" stroke-width="0.4" stroke-opacity="0.55"/>
<path d="M200.04,233.42 A59,59 0 0 1 197.06,223.36 Q251.90,204.94 247.06,194.31 L290.20,164.29 L290.61,164.88 L247.74,195.29 Q251.90,204.94 200.04,233.42 Z" fill="#e5e5e5" fill-opacity="0.92" stroke="#8a8a8a" stroke-width="0.4" stroke-opacity="0.55"/>
<path d="M196.91,222.55 A59,59 0 0 1 195.90,212.11 Q251.90,204.94 247.06,194.31 L290.20,164.29 L290.61,164.88 L247.74,195.29 Q251.90,204.94 196.91,222.55 Z" fill="#c8ede9" fill-opacity="0.92" stroke="#8a8a8a" stroke-width="0.4" stroke-opacity="0.55"/>
<path d="M195.90,211.29 A59,59 0 0 1 196.56,202.88 Q251.90,204.94 247.06,194.31 L290.20,164.29 L290.61,164.88 L247.74,195.29 Q251.90,204.94 195.90,211.29 Z" fill="#f8cfe2" fill-opacity="0.92" stroke="#8a8a8a" stroke-width="0.4" stroke-opacity="0.55"/>
<path d="M196.69,202.06 A59,59 0 0 1 198.36,194.84 Q251.90,204.94 247.06,194.31 L290.20,164.29 L290.61,164.88 L247.74,195.29 Q251.90,204.94 196.69,202.06 Z" fill="#d3d2c1" fill-opacity="0.92" stroke="#8a8a8a" stroke-width="0.4" stroke-opacity="0.55"/>
<path d="M198.60,194.06 A59,59 0 0 1 202.14,185.28 Q251.90,204.94 247.06,194.31 L290.20,164.29 L290.61,164.88 L247.74,195.29 Q251.90,204.94 198.60,194.06 Z" fill="#f2e1c8" fill-opacity="0.92" stroke="#8a8a8a" stroke-width="0.4" stroke-opacity="0.55"/>
<path d="M202.52,184.55 A59,59 0 0 1 207.53,176.52 Q251.90,204.94 247.06,194.31 L290.20,164.29 L290.61,164.88 L247.74,195.29 Q251.90,204.94 202.52,184.55 Z" fill="#dde9f7" fill-opacity="0.92" stroke="#8a8a8a" stroke-width="0.4" stroke-opacity="0.55"/>
<path d="M208.03,175.86 A59,59 0 0 1 212.89,170.27 Q251.90,204.94 247.06,194.31 L290.20,164.29 L290.61,164.88 L247.74,195.29 Q251.90,204.94 208.03,175.86 Z" fill="#f0eedf" fill-opacity="0.92" stroke="#8a8a8a" stroke-width="0.4" stroke-opacity="0.55"/>
<path d="M213.47,169.69 A59,59 0 0 1 218.25,165.46 Q251.90,204.94 247.06,194.31 L290.20,164.29 L290.61,164.88 L247.74,195.29 Q251.90,204.94 213.47,169.69 Z" fill="#e5e5e5" fill-opacity="0.92" stroke="#8a8a8a" stroke-width="0.4" stroke-opacity="0.55"/>
<path d="M218.90,164.95 A59,59 0 0 1 224.16,161.34 Q251.90,204.94 247.06,194.31 L290.20,164.29 L290.61,164.88 L247.74,195.29 Q251.90,204.94 218.90,164.95 Z" fill="#c8ede9" fill-opacity="0.92" stroke="#8a8a8a" stroke-width="0.4" stroke-opacity="0.55"/>
<path d="M224.87,160.92 A59,59 0 0 1 229.59,158.40 Q251.90,204.94 247.06,194.31 L290.20,164.29 L290.61,164.88 L247.74,195.29 Q251.90,204.94 224.87,160.92 Z" fill="#f8cfe2" fill-opacity="0.92" stroke="#8a8a8a" stroke-width="0.4" stroke-opacity="0.55"/>
<path d="M230.34,158.06 A59,59 0 0 1 235.30,156.05 Q251.90,204.94 247.06,194.31 L290.20,164.29 L290.61,164.88 L247.74,195.29 Q251.90,204.94 230.34,158.06 Z" fill="#f2e1c8" fill-opacity="0.92" stroke="#8a8a8a" stroke-width="0.4" stroke-opacity="0.55"/>
<path d="M236.08,155.78 A59,59 0 0 1 239.23,154.82 Q251.90,204.94 247.06,194.31 L290.20,164.29 L290.61,164.88 L247.74,195.29 Q251.90,204.94 236.08,155.78 Z" fill="#dde9f7" fill-opacity="0.92" stroke="#8a8a8a" stroke-width="0.4" stroke-opacity="0.55"/>
<path d="M240.03,154.61 A59,59 0 0 1 243.24,153.86 Q251.90,204.94 247.06,194.31 L290.20,164.29 L290.61,164.88 L247.74,195.29 Q251.90,204.94 240.03,154.61 Z" fill="#f0eedf" fill-opacity="0.92" stroke="#8a8a8a" stroke-width="0.4" stroke-opacity="0.55"/>
<path d="M244.05,153.71 A59,59 0 0 1 246.28,153.33 Q251.90,204.94 247.06,194.31 L290.20,164.29 L290.61,164.88 L247.74,195.29 Q251.90,204.94 244.05,153.71 Z" fill="#e5e5e5" fill-opacity="0.92" stroke="#8a8a8a" stroke-width="0.4" stroke-opacity="0.55"/>
<path d="M247.10,153.22 A59,59 0 0 1 249.35,152.96 Q251.90,204.94 247.06,194.31 L290.20,164.29 L290.61,164.88 L247.74,195.29 Q251.90,204.94 247.10,153.22 Z" fill="#c8ede9" fill-opacity="0.92" stroke="#8a8a8a" stroke-width="0.4" stroke-opacity="0.55"/>
<path d="M250.17,152.89 A59,59 0 0 1 251.40,152.80 Q251.90,204.94 247.06,194.31 L290.20,164.29 L290.61,164.88 L247.74,195.29 Q251.90,204.94 250.17,152.89 Z" fill="#f8cfe2" fill-opacity="0.92" stroke="#8a8a8a" stroke-width="0.4" stroke-opacity="0.55"/>
<path d="M252.22,152.76 A59,59 0 0 1 253.46,152.72 Q251.90,204.94 247.06,194.31 L290.20,164.29 L290.61,164.88 L247.74,195.29 Q251.90,204.94 252.22,152.76 Z" fill="#d3d2c1" fill-opacity="0.92" stroke="#8a8a8a" stroke-width="0.4" stroke-opacity="0.55"/>
<path d="M254.28,152.70 A59,59 0 0 1 254.49,152.70 Q251.90,204.94 247.06,194.31 L290.20,164.29 L290.61,164.88 L247.74,195.29 Q251.90,204.94 254.28,152.70 Z" fill="#f2e1c8" fill-opacity="0.92" stroke="#8a8a8a" stroke-width="0.4" stroke-opacity="0.55"/>
<path d="M254.90,143.70 A68,68 0 0 1 295.82,157.39 L290.71,164.18 A59.5,59.5 0 0 0 254.90,152.20 Z" fill="#b3b3b3"/>
<path d="M295.82,157.39 A68,68 0 0 1 295.35,266.36 L290.29,259.53 A59.5,59.5 0 0 0 290.71,164.18 Z" fill="#ee72ad"/>
<path d="M295.35,266.36 A68,68 0 0 1 217.37,268.40 L222.06,261.32 A59.5,59.5 0 0 0 290.29,259.53 Z" fill="#6e6b3b"/>
<path d="M217.37,268.40 A68,68 0 0 1 199.89,251.67 L206.76,246.67 A59.5,59.5 0 0 0 222.06,261.32 Z" fill="#a3c9ed"/>
<path d="M199.89,251.67 A68,68 0 0 1 191.85,237.17 L199.73,233.99 A59.5,59.5 0 0 0 206.76,246.67 Z" fill="#d6d1a0"/>
<path d="M191.85,237.17 A68,68 0 0 1 188.15,224.68 L196.49,223.05 A59.5,59.5 0 0 0 199.73,233.99 Z" fill="#b3b3b3"/>
<path d="M188.15,224.68 A68,68 0 0 1 186.90,211.70 L195.40,211.70 A59.5,59.5 0 0 0 196.49,223.05 Z" fill="#5bc4bc"/>
<path d="M186.90,211.70 A68,68 0 0 1 187.74,201.06 L196.13,202.39 A59.5,59.5 0 0 0 195.40,211.70 Z" fill="#ee72ad"/>
<path d="M187.74,201.06 A68,68 0 0 1 189.87,191.82 L198.00,194.30 A59.5,59.5 0 0 0 196.13,202.39 Z" fill="#6e6b3b"/>
<path d="M189.87,191.82 A68,68 0 0 1 194.31,180.83 L201.89,184.69 A59.5,59.5 0 0 0 198.00,194.30 Z" fill="#d49b55"/>
<path d="M194.31,180.83 A68,68 0 0 1 200.59,170.78 L207.38,175.89 A59.5,59.5 0 0 0 201.89,184.69 Z" fill="#a3c9ed"/>
<path d="M200.59,170.78 A68,68 0 0 1 206.82,163.62 L212.83,169.63 A59.5,59.5 0 0 0 207.38,175.89 Z" fill="#d6d1a0"/>
<path d="M206.82,163.62 A68,68 0 0 1 213.04,158.12 L218.27,164.81 A59.5,59.5 0 0 0 212.83,169.63 Z" fill="#b3b3b3"/>
<path d="M213.04,158.12 A68,68 0 0 1 219.88,153.41 L224.26,160.70 A59.5,59.5 0 0 0 218.27,164.81 Z" fill="#5bc4bc"/>
<path d="M219.88,153.41 A68,68 0 0 1 226.16,150.07 L229.75,157.77 A59.5,59.5 0 0 0 224.26,160.70 Z" fill="#ee72ad"/>
<path d="M226.16,150.07 A68,68 0 0 1 232.76,147.40 L235.53,155.44 A59.5,59.5 0 0 0 229.75,157.77 Z" fill="#d49b55"/>
<path d="M232.76,147.40 A68,68 0 0 1 237.30,146.02 L239.50,154.23 A59.5,59.5 0 0 0 235.53,155.44 Z" fill="#a3c9ed"/>
<path d="M237.30,146.02 A68,68 0 0 1 241.92,144.95 L243.55,153.29 A59.5,59.5 0 0 0 239.50,154.23 Z" fill="#d6d1a0"/>
<path d="M241.92,144.95 A68,68 0 0 1 245.44,144.36 L246.62,152.78 A59.5,59.5 0 0 0 243.55,153.29 Z" fill="#b3b3b3"/>
<path d="M245.44,144.36 A68,68 0 0 1 248.97,143.96 L249.71,152.43 A59.5,59.5 0 0 0 246.62,152.78 Z" fill="#5bc4bc"/>
<path d="M248.97,143.96 A68,68 0 0 1 251.34,143.79 L251.79,152.28 A59.5,59.5 0 0 0 249.71,152.43 Z" fill="#ee72ad"/>
<path d="M251.34,143.79 A68,68 0 0 1 253.71,143.71 L253.86,152.21 A59.5,59.5 0 0 0 251.79,152.28 Z" fill="#6e6b3b"/>
<path d="M253.71,143.71 A68,68 0 0 1 254.90,143.70 L254.90,152.20 A59.5,59.5 0 0 0 253.86,152.21 Z" fill="#d49b55"/>
<text x="268.9" y="170.7" transform="rotate(-80 268.9 170.7)" font-size="9" fill="#444" text-anchor="middle" dominant-baseline="middle" font-family='"Liberation Sans", sans-serif'>10</text>
<text x="300.8" y="212.0" transform="rotate(0 300.8 212.0)" font-size="9" fill="#444" text-anchor="middle" dominant-baseline="middle" font-family='"Liberation Sans", sans-serif'>28</text>
<text x="255.1" y="254.2" transform="rotate(90 255.1 254.2)" font-size="9" fill="#444" text-anchor="middle" dominant-baseline="middle" font-family='"Liberation Sans", sans-serif'>19</text>
<text x="219.0" y="194.8" transform="rotate(-15 219.0 194.8)" font-size="9" fill="#444" text-anchor="middle" dominant-baseline="middle" font-family='"Liberation Sans", sans-serif'>2</text>
<text x="217.3" y="200.8" transform="rotate(-15 217.3 200.8)" font-size="9" fill="#444" text-anchor="middle" dominant-baseline="middle" font-family='"Liberation Sans", sans-serif'>2</text>
<text x="216.4" y="206.8" transform="rotate(-15 216.4 206.8)" font-size="9" fill="#444" text-anchor="middle" dominant-baseline="middle" font-family='"Liberation Sans", sans-serif'>2</text>
<text x="215.6" y="214.6" transform="rotate(-10 215.6 214.6)" font-size="9" fill="#444" text-anchor="middle" dominant-baseline="middle" font-family='"Liberation Sans", sans-serif'>3</text>
<text x="217.3" y="223.2" transform="rotate(-10 217.3 223.2)" font-size="9" fill="#444" text-anchor="middle" dominant-baseline="middle" font-family='"Liberation Sans", sans-serif'>3</text>
<text x="220.7" y="231.8" transform="rotate(-20 220.7 231.8)" font-size="9" fill="#444" text-anchor="middle" dominant-baseline="middle" font-family='"Liberation Sans", sans-serif'>4</text>
<text x="227.6" y="241.3" transform="rotate(-45 227.6 241.3)" font-size="9" fill="#444" text-anchor="middle" dominant-baseline="middle" font-family='"Liberation Sans", sans-serif'>5</text>
<path d="M407,212.2 L407.00,144.20 A68,68 0 1 1 394.26,279.00 Z" fill="#b5b5b5"/>
<path d="M407,212.2 L394.26,279.00 A68,68 0 0 1 339.02,213.74 Z" fill="#5ec4bd"/>
<path d="M407,212.2 L339.02,213.74 A68,68 0 0 1 360.28,162.79 Z" fill="#ef73ad"/>
<path d="M407,212.2 L360.28,162.79 A68,68 0 0 1 381.97,148.98 Z" fill="#706c3b"/>
<path d="M407,212.2 L381.97,148.98 A68,68 0 0 1 405.81,144.21 Z" fill="#d39b56"/>
<path d="M407,212.2 L405.81,144.21 A68,68 0 0 1 407.00,144.20 Z" fill="#a3c9ed"/>
<circle cx="407" cy="212.2" r="13.2" fill="#fff"/>
<text x="435.8" y="214.7" transform="rotate(0 435.8 214.7)" font-size="9" fill="#333" text-anchor="middle" dominant-baseline="middle" font-family='"Liberation Sans", sans-serif'>53%</text>
<text x="384.5" y="231.0" transform="rotate(-42 384.5 231.0)" font-size="9" fill="#333" text-anchor="middle" dominant-baseline="middle" font-family='"Liberation Sans", sans-serif'>22%</text>
<text x="380.2" y="201.1" transform="rotate(20 380.2 201.1)" font-size="9" fill="#333" text-anchor="middle" dominant-baseline="middle" font-family='"Liberation Sans", sans-serif'>13%</text>
<text x="391.2" y="190.1" transform="rotate(55 391.2 190.1)" font-size="9" fill="#333" text-anchor="middle" dominant-baseline="middle" font-family='"Liberation Sans", sans-serif'>6%</text>
<text x="401.9" y="185.8" transform="rotate(90 401.9 185.8)" font-size="9" fill="#333" text-anchor="middle" dominant-baseline="middle" font-family='"Liberation Sans", sans-serif'>6%</text>
<circle cx="128.2" cy="286.5" r="3.31" fill="none" stroke="#b0b0b0" stroke-width="2.30"/><line x1="130.96" y1="286.50" x2="132.80" y2="286.50" stroke="#b0b0b0" stroke-width="1.75"/><line x1="130.15" y1="288.45" x2="131.45" y2="289.75" stroke="#b0b0b0" stroke-width="1.75"/><line x1="128.20" y1="289.26" x2="128.20" y2="291.10" stroke="#b0b0b0" stroke-width="1.75"/><line x1="126.25" y1="288.45" x2="124.95" y2="289.75" stroke="#b0b0b0" stroke-width="1.75"/><line x1="125.44" y1="286.50" x2="123.60" y2="286.50" stroke="#b0b0b0" stroke-width="1.75"/><line x1="126.25" y1="284.55" x2="124.95" y2="283.25" stroke="#b0b0b0" stroke-width="1.75"/><line x1="128.20" y1="283.74" x2="128.20" y2="281.90" stroke="#b0b0b0" stroke-width="1.75"/><line x1="130.15" y1="284.55" x2="131.45" y2="283.25" stroke="#b0b0b0" stroke-width="1.75"/><circle cx="121.99999999999999" cy="292.3" r="1.87" fill="none" stroke="#b0b0b0" stroke-width="1.30"/><line x1="123.56" y1="292.30" x2="124.60" y2="292.30" stroke="#b0b0b0" stroke-width="0.99"/><line x1="122.78" y1="293.65" x2="123.30" y2="294.55" stroke="#b0b0b0" stroke-width="0.99"/><line x1="121.22" y1="293.65" x2="120.70" y2="294.55" stroke="#b0b0b0" stroke-width="0.99"/><line x1="120.44" y1="292.30" x2="119.40" y2="292.30" stroke="#b0b0b0" stroke-width="0.99"/><line x1="121.22" y1="290.95" x2="120.70" y2="290.05" stroke="#b0b0b0" stroke-width="0.99"/><line x1="122.78" y1="290.95" x2="123.30" y2="290.05" stroke="#b0b0b0" stroke-width="0.99"/><rect x="139.4" y="283.4" width="10.5" height="1.4" fill="#b0b0b0"/><rect x="142.9" y="282.2" width="3.5" height="1.6" fill="none" stroke="#b0b0b0" stroke-width="1"/><path d="M140.6,285.5 L141.4,293.8 L147.9,293.8 L148.70000000000002,285.5" fill="none" stroke="#b0b0b0" stroke-width="1.2"/><line x1="143.1" y1="287" x2="143.1" y2="292" stroke="#b0b0b0" stroke-width="0.8"/><line x1="144.65" y1="287" x2="144.65" y2="292" stroke="#b0b0b0" stroke-width="0.8"/><line x1="146.20000000000002" y1="287" x2="146.20000000000002" y2="292" stroke="#b0b0b0" stroke-width="0.8"/><path d="M163,284.2 L158.5,284.2 Q157.6,284.2 157.6,285.1 L157.6,292.5 Q157.6,293.4 158.5,293.4 L166,293.4 Q166.9,293.4 166.9,292.5 L166.9,289" fill="none" stroke="#b0b0b0" stroke-width="1.3"/><line x1="162" y1="289.5" x2="168" y2="283.5" stroke="#b0b0b0" stroke-width="1.5"/><path d="M165,282 L170,282 L170,287 Z" fill="#b0b0b0"/>
<circle cx="280.2" cy="286.5" r="3.31" fill="none" stroke="#b0b0b0" stroke-width="2.30"/><line x1="282.96" y1="286.50" x2="284.80" y2="286.50" stroke="#b0b0b0" stroke-width="1.75"/><line x1="282.15" y1="288.45" x2="283.45" y2="289.75" stroke="#b0b0b0" stroke-width="1.75"/><line x1="280.20" y1="289.26" x2="280.20" y2="291.10" stroke="#b0b0b0" stroke-width="1.75"/><line x1="278.25" y1="288.45" x2="276.95" y2="289.75" stroke="#b0b0b0" stroke-width="1.75"/><line x1="277.44" y1="286.50" x2="275.60" y2="286.50" stroke="#b0b0b0" stroke-width="1.75"/><line x1="278.25" y1="284.55" x2="276.95" y2="283.25" stroke="#b0b0b0" stroke-width="1.75"/><line x1="280.20" y1="283.74" x2="280.20" y2="281.90" stroke="#b0b0b0" stroke-width="1.75"/><line x1="282.15" y1="284.55" x2="283.45" y2="283.25" stroke="#b0b0b0" stroke-width="1.75"/><circle cx="274.0" cy="292.3" r="1.87" fill="none" stroke="#b0b0b0" stroke-width="1.30"/><line x1="275.56" y1="292.30" x2="276.60" y2="292.30" stroke="#b0b0b0" stroke-width="0.99"/><line x1="274.78" y1="293.65" x2="275.30" y2="294.55" stroke="#b0b0b0" stroke-width="0.99"/><line x1="273.22" y1="293.65" x2="272.70" y2="294.55" stroke="#b0b0b0" stroke-width="0.99"/><line x1="272.44" y1="292.30" x2="271.40" y2="292.30" stroke="#b0b0b0" stroke-width="0.99"/><line x1="273.22" y1="290.95" x2="272.70" y2="290.05" stroke="#b0b0b0" stroke-width="0.99"/><line x1="274.78" y1="290.95" x2="275.30" y2="290.05" stroke="#b0b0b0" stroke-width="0.99"/><rect x="291.4" y="283.4" width="10.5" height="1.4" fill="#b0b0b0"/><rect x="294.9" y="282.2" width="3.5" height="1.6" fill="none" stroke="#b0b0b0" stroke-width="1"/><path d="M292.59999999999997,285.5 L293.4,293.8 L299.9,293.8 L300.7,285.5" fill="none" stroke="#b0b0b0" stroke-width="1.2"/><line x1="295.09999999999997" y1="287" x2="295.09999999999997" y2="292" stroke="#b0b0b0" stroke-width="0.8"/><line x1="296.65" y1="287" x2="296.65" y2="292" stroke="#b0b0b0" stroke-width="0.8"/><line x1="298.2" y1="287" x2="298.2" y2="292" stroke="#b0b0b0" stroke-width="0.8"/><path d="M315,284.2 L310.5,284.2 Q309.6,284.2 309.6,285.1 L309.6,292.5 Q309.6,293.4 310.5,293.4 L318,293.4 Q318.9,293.4 318.9,292.5 L318.9,289" fill="none" stroke="#b0b0b0" stroke-width="1.3"/><line x1="314" y1="289.5" x2="320" y2="283.5" stroke="#b0b0b0" stroke-width="1.5"/><path d="M317,282 L322,282 L322,287 Z" fill="#b0b0b0"/>
<circle cx="432.2" cy="286.5" r="3.31" fill="none" stroke="#b0b0b0" stroke-width="2.30"/><line x1="434.96" y1="286.50" x2="436.80" y2="286.50" stroke="#b0b0b0" stroke-width="1.75"/><line x1="434.15" y1="288.45" x2="435.45" y2="289.75" stroke="#b0b0b0" stroke-width="1.75"/><line x1="432.20" y1="289.26" x2="432.20" y2="291.10" stroke="#b0b0b0" stroke-width="1.75"/><line x1="430.25" y1="288.45" x2="428.95" y2="289.75" stroke="#b0b0b0" stroke-width="1.75"/><line x1="429.44" y1="286.50" x2="427.60" y2="286.50" stroke="#b0b0b0" stroke-width="1.75"/><line x1="430.25" y1="284.55" x2="428.95" y2="283.25" stroke="#b0b0b0" stroke-width="1.75"/><line x1="432.20" y1="283.74" x2="432.20" y2="281.90" stroke="#b0b0b0" stroke-width="1.75"/><line x1="434.15" y1="284.55" x2="435.45" y2="283.25" stroke="#b0b0b0" stroke-width="1.75"/><circle cx="426.0" cy="292.3" r="1.87" fill="none" stroke="#b0b0b0" stroke-width="1.30"/><line x1="427.56" y1="292.30" x2="428.60" y2="292.30" stroke="#b0b0b0" stroke-width="0.99"/><line x1="426.78" y1="293.65" x2="427.30" y2="294.55" stroke="#b0b0b0" stroke-width="0.99"/><line x1="425.22" y1="293.65" x2="424.70" y2="294.55" stroke="#b0b0b0" stroke-width="0.99"/><line x1="424.44" y1="292.30" x2="423.40" y2="292.30" stroke="#b0b0b0" stroke-width="0.99"/><line x1="425.22" y1="290.95" x2="424.70" y2="290.05" stroke="#b0b0b0" stroke-width="0.99"/><line x1="426.78" y1="290.95" x2="427.30" y2="290.05" stroke="#b0b0b0" stroke-width="0.99"/><rect x="443.4" y="283.4" width="10.5" height="1.4" fill="#b0b0b0"/><rect x="446.9" y="282.2" width="3.5" height="1.6" fill="none" stroke="#b0b0b0" stroke-width="1"/><path d="M444.59999999999997,285.5 L445.4,293.8 L451.9,293.8 L452.7,285.5" fill="none" stroke="#b0b0b0" stroke-width="1.2"/><line x1="447.09999999999997" y1="287" x2="447.09999999999997" y2="292" stroke="#b0b0b0" stroke-width="0.8"/><line x1="448.65" y1="287" x2="448.65" y2="292" stroke="#b0b0b0" stroke-width="0.8"/><line x1="450.2" y1="287" x2="450.2" y2="292" stroke="#b0b0b0" stroke-width="0.8"/><path d="M467,284.2 L462.5,284.2 Q461.6,284.2 461.6,285.1 L461.6,292.5 Q461.6,293.4 462.5,293.4 L470,293.4 Q470.9,293.4 470.9,292.5 L470.9,289" fill="none" stroke="#b0b0b0" stroke-width="1.3"/><line x1="466" y1="289.5" x2="472" y2="283.5" stroke="#b0b0b0" stroke-width="1.5"/><path d="M469,282 L474,282 L474,287 Z" fill="#b0b0b0"/>
<path d="M178.02,494.58 A82,82 0 1 1 293.98,494.58 L275.47,476.07 A57.5,57.5 0 1 0 185.59,487.01 Z" fill="#b7c51d"/>
<path d="M238.88,429.46 L217.53,450.92 L215.93,453.21 L207.03,462.47 L205.36,464.69 L197.11,473.30 L195.47,475.56 L185.34,486.18 L175.89,496.19 L176.31,496.61 L186.39,487.24 L197.09,477.19 L199.36,475.57 L208.04,467.39 L210.27,465.73 L219.60,456.90 L221.90,455.32 L243.52,434.14 Z" fill="#787878"/>
<circle cx="241.2" cy="431.8" r="3.1" fill="#787878"/>
<circle cx="319.5" cy="534.6" r="2.3" fill="none" stroke="#c9c9c9" stroke-width="1.5"/><line x1="321.90" y1="534.60" x2="323.20" y2="534.60" stroke="#c9c9c9" stroke-width="1.1"/><line x1="321.20" y1="536.30" x2="322.12" y2="537.22" stroke="#c9c9c9" stroke-width="1.1"/><line x1="319.50" y1="537.00" x2="319.50" y2="538.30" stroke="#c9c9c9" stroke-width="1.1"/><line x1="317.80" y1="536.30" x2="316.88" y2="537.22" stroke="#c9c9c9" stroke-width="1.1"/><line x1="317.10" y1="534.60" x2="315.80" y2="534.60" stroke="#c9c9c9" stroke-width="1.1"/><line x1="317.80" y1="532.90" x2="316.88" y2="531.98" stroke="#c9c9c9" stroke-width="1.1"/><line x1="319.50" y1="532.20" x2="319.50" y2="530.90" stroke="#c9c9c9" stroke-width="1.1"/><line x1="321.20" y1="532.90" x2="322.12" y2="531.98" stroke="#c9c9c9" stroke-width="1.1"/><path d="M326.5,531 L332.5,531 L331.5,532.2 L331.5,534.2 L332.9,535.6 L326.1,535.6 L327.5,534.2 L327.5,532.2 Z" fill="#c9c9c9"/><line x1="329.5" y1="535.6" x2="329.5" y2="538.8" stroke="#c9c9c9" stroke-width="1"/>
<path d="M441.01,383.89 A21.2,21.2 0 1 1 470.99,383.89 L466.21,379.11 A14.865853658536587,14.865853658536587 0 1 0 442.97,381.93 Z" fill="#b7c51d"/>
<line x1="457.8" y1="367.2" x2="444.8" y2="380.0" stroke="#5a5a5a" stroke-width="0.8" stroke-linecap="round"/>
<circle cx="473.5" cy="388.6" r="2.3" fill="none" stroke="#c9c9c9" stroke-width="1.5"/><line x1="475.90" y1="388.60" x2="477.20" y2="388.60" stroke="#c9c9c9" stroke-width="1.1"/><line x1="475.20" y1="390.30" x2="476.12" y2="391.22" stroke="#c9c9c9" stroke-width="1.1"/><line x1="473.50" y1="391.00" x2="473.50" y2="392.30" stroke="#c9c9c9" stroke-width="1.1"/><line x1="471.80" y1="390.30" x2="470.88" y2="391.22" stroke="#c9c9c9" stroke-width="1.1"/><line x1="471.10" y1="388.60" x2="469.80" y2="388.60" stroke="#c9c9c9" stroke-width="1.1"/><line x1="471.80" y1="386.90" x2="470.88" y2="385.98" stroke="#c9c9c9" stroke-width="1.1"/><line x1="473.50" y1="386.20" x2="473.50" y2="384.90" stroke="#c9c9c9" stroke-width="1.1"/><line x1="475.20" y1="386.90" x2="476.12" y2="385.98" stroke="#c9c9c9" stroke-width="1.1"/><path d="M480.5,385 L486.5,385 L485.5,386.2 L485.5,388.2 L486.9,389.6 L480.1,389.6 L481.5,388.2 L481.5,386.2 Z" fill="#c9c9c9"/><line x1="483.5" y1="389.6" x2="483.5" y2="392.8" stroke="#c9c9c9" stroke-width="1"/>
<path d="M595.01,383.89 A21.2,21.2 0 1 1 624.99,383.89 L620.21,379.11 A14.865853658536587,14.865853658536587 0 1 0 596.97,381.93 Z" fill="#b7c51d"/>
<line x1="611.8" y1="367.2" x2="598.8" y2="380.0" stroke="#5a5a5a" stroke-width="0.8" stroke-linecap="round"/>
<circle cx="627.5" cy="388.6" r="2.3" fill="none" stroke="#c9c9c9" stroke-width="1.5"/><line x1="629.90" y1="388.60" x2="631.20" y2="388.60" stroke="#c9c9c9" stroke-width="1.1"/><line x1="629.20" y1="390.30" x2="630.12" y2="391.22" stroke="#c9c9c9" stroke-width="1.1"/><line x1="627.50" y1="391.00" x2="627.50" y2="392.30" stroke="#c9c9c9" stroke-width="1.1"/><line x1="625.80" y1="390.30" x2="624.88" y2="391.22" stroke="#c9c9c9" stroke-width="1.1"/><line x1="625.10" y1="388.60" x2="623.80" y2="388.60" stroke="#c9c9c9" stroke-width="1.1"/><line x1="625.80" y1="386.90" x2="624.88" y2="385.98" stroke="#c9c9c9" stroke-width="1.1"/><line x1="627.50" y1="386.20" x2="627.50" y2="384.90" stroke="#c9c9c9" stroke-width="1.1"/><line x1="629.20" y1="386.90" x2="630.12" y2="385.98" stroke="#c9c9c9" stroke-width="1.1"/><path d="M634.5,385 L640.5,385 L639.5,386.2 L639.5,388.2 L640.9,389.6 L634.1,389.6 L635.5,388.2 L635.5,386.2 Z" fill="#c9c9c9"/><line x1="637.5" y1="389.6" x2="637.5" y2="392.8" stroke="#c9c9c9" stroke-width="1"/>
<path d="M749.01,383.89 A21.2,21.2 0 1 1 778.99,383.89 L774.21,379.11 A14.865853658536587,14.865853658536587 0 1 0 750.97,381.93 Z" fill="#b7c51d"/>
<line x1="765.8" y1="367.2" x2="752.8" y2="380.0" stroke="#5a5a5a" stroke-width="0.8" stroke-linecap="round"/>
<circle cx="781.5" cy="388.6" r="2.3" fill="none" stroke="#c9c9c9" stroke-width="1.5"/><line x1="783.90" y1="388.60" x2="785.20" y2="388.60" stroke="#c9c9c9" stroke-width="1.1"/><line x1="783.20" y1="390.30" x2="784.12" y2="391.22" stroke="#c9c9c9" stroke-width="1.1"/><line x1="781.50" y1="391.00" x2="781.50" y2="392.30" stroke="#c9c9c9" stroke-width="1.1"/><line x1="779.80" y1="390.30" x2="778.88" y2="391.22" stroke="#c9c9c9" stroke-width="1.1"/><line x1="779.10" y1="388.60" x2="777.80" y2="388.60" stroke="#c9c9c9" stroke-width="1.1"/><line x1="779.80" y1="386.90" x2="778.88" y2="385.98" stroke="#c9c9c9" stroke-width="1.1"/><line x1="781.50" y1="386.20" x2="781.50" y2="384.90" stroke="#c9c9c9" stroke-width="1.1"/><line x1="783.20" y1="386.90" x2="784.12" y2="385.98" stroke="#c9c9c9" stroke-width="1.1"/><path d="M788.5,385 L794.5,385 L793.5,386.2 L793.5,388.2 L794.9,389.6 L788.1,389.6 L789.5,388.2 L789.5,386.2 Z" fill="#c9c9c9"/><line x1="791.5" y1="389.6" x2="791.5" y2="392.8" stroke="#c9c9c9" stroke-width="1"/>
<path d="M441.01,456.89 A21.2,21.2 0 1 1 470.99,456.89 L466.21,452.11 A14.865853658536587,14.865853658536587 0 1 0 442.97,454.93 Z" fill="#b7c51d"/>
<line x1="457.8" y1="440.2" x2="444.8" y2="453.0" stroke="#5a5a5a" stroke-width="0.8" stroke-linecap="round"/>
<circle cx="473.5" cy="461.6" r="2.3" fill="none" stroke="#c9c9c9" stroke-width="1.5"/><line x1="475.90" y1="461.60" x2="477.20" y2="461.60" stroke="#c9c9c9" stroke-width="1.1"/><line x1="475.20" y1="463.30" x2="476.12" y2="464.22" stroke="#c9c9c9" stroke-width="1.1"/><line x1="473.50" y1="464.00" x2="473.50" y2="465.30" stroke="#c9c9c9" stroke-width="1.1"/><line x1="471.80" y1="463.30" x2="470.88" y2="464.22" stroke="#c9c9c9" stroke-width="1.1"/><line x1="471.10" y1="461.60" x2="469.80" y2="461.60" stroke="#c9c9c9" stroke-width="1.1"/><line x1="471.80" y1="459.90" x2="470.88" y2="458.98" stroke="#c9c9c9" stroke-width="1.1"/><line x1="473.50" y1="459.20" x2="473.50" y2="457.90" stroke="#c9c9c9" stroke-width="1.1"/><line x1="475.20" y1="459.90" x2="476.12" y2="458.98" stroke="#c9c9c9" stroke-width="1.1"/><path d="M480.5,458 L486.5,458 L485.5,459.2 L485.5,461.2 L486.9,462.6 L480.1,462.6 L481.5,461.2 L481.5,459.2 Z" fill="#c9c9c9"/><line x1="483.5" y1="462.6" x2="483.5" y2="465.8" stroke="#c9c9c9" stroke-width="1"/>
<path d="M595.01,456.89 A21.2,21.2 0 1 1 624.99,456.89 L620.21,452.11 A14.865853658536587,14.865853658536587 0 1 0 596.97,454.93 Z" fill="#b7c51d"/>
<line x1="611.8" y1="440.2" x2="598.8" y2="453.0" stroke="#5a5a5a" stroke-width="0.8" stroke-linecap="round"/>
<circle cx="627.5" cy="461.6" r="2.3" fill="none" stroke="#c9c9c9" stroke-width="1.5"/><line x1="629.90" y1="461.60" x2="631.20" y2="461.60" stroke="#c9c9c9" stroke-width="1.1"/><line x1="629.20" y1="463.30" x2="630.12" y2="464.22" stroke="#c9c9c9" stroke-width="1.1"/><line x1="627.50" y1="464.00" x2="627.50" y2="465.30" stroke="#c9c9c9" stroke-width="1.1"/><line x1="625.80" y1="463.30" x2="624.88" y2="464.22" stroke="#c9c9c9" stroke-width="1.1"/><line x1="625.10" y1="461.60" x2="623.80" y2="461.60" stroke="#c9c9c9" stroke-width="1.1"/><line x1="625.80" y1="459.90" x2="624.88" y2="458.98" stroke="#c9c9c9" stroke-width="1.1"/><line x1="627.50" y1="459.20" x2="627.50" y2="457.90" stroke="#c9c9c9" stroke-width="1.1"/><line x1="629.20" y1="459.90" x2="630.12" y2="458.98" stroke="#c9c9c9" stroke-width="1.1"/><path d="M634.5,458 L640.5,458 L639.5,459.2 L639.5,461.2 L640.9,462.6 L634.1,462.6 L635.5,461.2 L635.5,459.2 Z" fill="#c9c9c9"/><line x1="637.5" y1="462.6" x2="637.5" y2="465.8" stroke="#c9c9c9" stroke-width="1"/>
<path d="M749.01,456.89 A21.2,21.2 0 1 1 778.99,456.89 L774.21,452.11 A14.865853658536587,14.865853658536587 0 1 0 750.97,454.93 Z" fill="#b7c51d"/>
<line x1="766.4" y1="441.0" x2="753" y2="446.2" stroke="#4a4a4a" stroke-width="1.1" stroke-dasharray="4 0.7 2.5 0.8 2 1"/><line x1="753" y1="446.2" x2="744.5" y2="449.5" stroke="#777" stroke-width="0.8" stroke-dasharray="1.4 1.2"/><circle cx="743.2" cy="443.29999999999995" r="1.2" fill="#fff"/>
<circle cx="781.5" cy="461.6" r="2.3" fill="none" stroke="#c9c9c9" stroke-width="1.5"/><line x1="783.90" y1="461.60" x2="785.20" y2="461.60" stroke="#c9c9c9" stroke-width="1.1"/><line x1="783.20" y1="463.30" x2="784.12" y2="464.22" stroke="#c9c9c9" stroke-width="1.1"/><line x1="781.50" y1="464.00" x2="781.50" y2="465.30" stroke="#c9c9c9" stroke-width="1.1"/><line x1="779.80" y1="463.30" x2="778.88" y2="464.22" stroke="#c9c9c9" stroke-width="1.1"/><line x1="779.10" y1="461.60" x2="777.80" y2="461.60" stroke="#c9c9c9" stroke-width="1.1"/><line x1="779.80" y1="459.90" x2="778.88" y2="458.98" stroke="#c9c9c9" stroke-width="1.1"/><line x1="781.50" y1="459.20" x2="781.50" y2="457.90" stroke="#c9c9c9" stroke-width="1.1"/><line x1="783.20" y1="459.90" x2="784.12" y2="458.98" stroke="#c9c9c9" stroke-width="1.1"/><path d="M788.5,458 L794.5,458 L793.5,459.2 L793.5,461.2 L794.9,462.6 L788.1,462.6 L789.5,461.2 L789.5,459.2 Z" fill="#c9c9c9"/><line x1="791.5" y1="462.6" x2="791.5" y2="465.8" stroke="#c9c9c9" stroke-width="1"/>
<path d="M441.01,529.89 A21.2,21.2 0 1 1 470.99,529.89 L466.21,525.11 A14.865853658536587,14.865853658536587 0 1 0 442.97,527.93 Z" fill="#b7c51d"/>
<line x1="457.8" y1="513.1999999999999" x2="444.8" y2="526.0" stroke="#5a5a5a" stroke-width="0.8" stroke-linecap="round"/>
<circle cx="473.5" cy="534.6" r="2.3" fill="none" stroke="#c9c9c9" stroke-width="1.5"/><line x1="475.90" y1="534.60" x2="477.20" y2="534.60" stroke="#c9c9c9" stroke-width="1.1"/><line x1="475.20" y1="536.30" x2="476.12" y2="537.22" stroke="#c9c9c9" stroke-width="1.1"/><line x1="473.50" y1="537.00" x2="473.50" y2="538.30" stroke="#c9c9c9" stroke-width="1.1"/><line x1="471.80" y1="536.30" x2="470.88" y2="537.22" stroke="#c9c9c9" stroke-width="1.1"/><line x1="471.10" y1="534.60" x2="469.80" y2="534.60" stroke="#c9c9c9" stroke-width="1.1"/><line x1="471.80" y1="532.90" x2="470.88" y2="531.98" stroke="#c9c9c9" stroke-width="1.1"/><line x1="473.50" y1="532.20" x2="473.50" y2="530.90" stroke="#c9c9c9" stroke-width="1.1"/><line x1="475.20" y1="532.90" x2="476.12" y2="531.98" stroke="#c9c9c9" stroke-width="1.1"/><path d="M480.5,531 L486.5,531 L485.5,532.2 L485.5,534.2 L486.9,535.6 L480.1,535.6 L481.5,534.2 L481.5,532.2 Z" fill="#c9c9c9"/><line x1="483.5" y1="535.6" x2="483.5" y2="538.8" stroke="#c9c9c9" stroke-width="1"/>
<path d="M595.01,529.89 A21.2,21.2 0 1 1 624.99,529.89 L620.21,525.11 A14.865853658536587,14.865853658536587 0 1 0 596.97,527.93 Z" fill="#b7c51d"/>
<line x1="611.8" y1="513.1999999999999" x2="598.8" y2="526.0" stroke="#5a5a5a" stroke-width="0.8" stroke-linecap="round"/>
<circle cx="627.5" cy="534.6" r="2.3" fill="none" stroke="#c9c9c9" stroke-width="1.5"/><line x1="629.90" y1="534.60" x2="631.20" y2="534.60" stroke="#c9c9c9" stroke-width="1.1"/><line x1="629.20" y1="536.30" x2="630.12" y2="537.22" stroke="#c9c9c9" stroke-width="1.1"/><line x1="627.50" y1="537.00" x2="627.50" y2="538.30" stroke="#c9c9c9" stroke-width="1.1"/><line x1="625.80" y1="536.30" x2="624.88" y2="537.22" stroke="#c9c9c9" stroke-width="1.1"/><line x1="625.10" y1="534.60" x2="623.80" y2="534.60" stroke="#c9c9c9" stroke-width="1.1"/><line x1="625.80" y1="532.90" x2="624.88" y2="531.98" stroke="#c9c9c9" stroke-width="1.1"/><line x1="627.50" y1="532.20" x2="627.50" y2="530.90" stroke="#c9c9c9" stroke-width="1.1"/><line x1="629.20" y1="532.90" x2="630.12" y2="531.98" stroke="#c9c9c9" stroke-width="1.1"/><path d="M634.5,531 L640.5,531 L639.5,532.2 L639.5,534.2 L640.9,535.6 L634.1,535.6 L635.5,534.2 L635.5,532.2 Z" fill="#c9c9c9"/><line x1="637.5" y1="535.6" x2="637.5" y2="538.8" stroke="#c9c9c9" stroke-width="1"/>
<circle cx="829" cy="675.5" r="3.1" fill="none" stroke="#454545" stroke-width="1.8"/><line x1="832.20" y1="675.50" x2="833.70" y2="675.50" stroke="#454545" stroke-width="1.3"/><line x1="831.26" y1="677.76" x2="832.32" y2="678.82" stroke="#454545" stroke-width="1.3"/><line x1="829.00" y1="678.70" x2="829.00" y2="680.20" stroke="#454545" stroke-width="1.3"/><line x1="826.74" y1="677.76" x2="825.68" y2="678.82" stroke="#454545" stroke-width="1.3"/><line x1="825.80" y1="675.50" x2="824.30" y2="675.50" stroke="#454545" stroke-width="1.3"/><line x1="826.74" y1="673.24" x2="825.68" y2="672.18" stroke="#454545" stroke-width="1.3"/><line x1="829.00" y1="672.30" x2="829.00" y2="670.80" stroke="#454545" stroke-width="1.3"/><line x1="831.26" y1="673.24" x2="832.32" y2="672.18" stroke="#454545" stroke-width="1.3"/><circle cx="823.1" cy="681.3" r="1.7" fill="none" stroke="#454545" stroke-width="1.2"/><line x1="824.67" y1="681.95" x2="825.87" y2="682.45" stroke="#454545" stroke-width="0.9"/><line x1="823.75" y1="682.87" x2="824.25" y2="684.07" stroke="#454545" stroke-width="0.9"/><line x1="822.45" y1="682.87" x2="821.95" y2="684.07" stroke="#454545" stroke-width="0.9"/><line x1="821.53" y1="681.95" x2="820.33" y2="682.45" stroke="#454545" stroke-width="0.9"/><line x1="821.53" y1="680.65" x2="820.33" y2="680.15" stroke="#454545" stroke-width="0.9"/><line x1="822.45" y1="679.73" x2="821.95" y2="678.53" stroke="#454545" stroke-width="0.9"/><line x1="823.75" y1="679.73" x2="824.25" y2="678.53" stroke="#454545" stroke-width="0.9"/><line x1="824.67" y1="680.65" x2="825.87" y2="680.15" stroke="#454545" stroke-width="0.9"/>
<circle cx="829" cy="706.5" r="3.1" fill="none" stroke="#454545" stroke-width="1.8"/><line x1="832.20" y1="706.50" x2="833.70" y2="706.50" stroke="#454545" stroke-width="1.3"/><line x1="831.26" y1="708.76" x2="832.32" y2="709.82" stroke="#454545" stroke-width="1.3"/><line x1="829.00" y1="709.70" x2="829.00" y2="711.20" stroke="#454545" stroke-width="1.3"/><line x1="826.74" y1="708.76" x2="825.68" y2="709.82" stroke="#454545" stroke-width="1.3"/><line x1="825.80" y1="706.50" x2="824.30" y2="706.50" stroke="#454545" stroke-width="1.3"/><line x1="826.74" y1="704.24" x2="825.68" y2="703.18" stroke="#454545" stroke-width="1.3"/><line x1="829.00" y1="703.30" x2="829.00" y2="701.80" stroke="#454545" stroke-width="1.3"/><line x1="831.26" y1="704.24" x2="832.32" y2="703.18" stroke="#454545" stroke-width="1.3"/><circle cx="823.1" cy="712.3" r="1.7" fill="none" stroke="#454545" stroke-width="1.2"/><line x1="824.67" y1="712.95" x2="825.87" y2="713.45" stroke="#454545" stroke-width="0.9"/><line x1="823.75" y1="713.87" x2="824.25" y2="715.07" stroke="#454545" stroke-width="0.9"/><line x1="822.45" y1="713.87" x2="821.95" y2="715.07" stroke="#454545" stroke-width="0.9"/><line x1="821.53" y1="712.95" x2="820.33" y2="713.45" stroke="#454545" stroke-width="0.9"/><line x1="821.53" y1="711.65" x2="820.33" y2="711.15" stroke="#454545" stroke-width="0.9"/><line x1="822.45" y1="710.73" x2="821.95" y2="709.53" stroke="#454545" stroke-width="0.9"/><line x1="823.75" y1="710.73" x2="824.25" y2="709.53" stroke="#454545" stroke-width="0.9"/><line x1="824.67" y1="711.65" x2="825.87" y2="711.15" stroke="#454545" stroke-width="0.9"/>
<circle cx="829" cy="737.5" r="3.1" fill="none" stroke="#454545" stroke-width="1.8"/><line x1="832.20" y1="737.50" x2="833.70" y2="737.50" stroke="#454545" stroke-width="1.3"/><line x1="831.26" y1="739.76" x2="832.32" y2="740.82" stroke="#454545" stroke-width="1.3"/><line x1="829.00" y1="740.70" x2="829.00" y2="742.20" stroke="#454545" stroke-width="1.3"/><line x1="826.74" y1="739.76" x2="825.68" y2="740.82" stroke="#454545" stroke-width="1.3"/><line x1="825.80" y1="737.50" x2="824.30" y2="737.50" stroke="#454545" stroke-width="1.3"/><line x1="826.74" y1="735.24" x2="825.68" y2="734.18" stroke="#454545" stroke-width="1.3"/><line x1="829.00" y1="734.30" x2="829.00" y2="732.80" stroke="#454545" stroke-width="1.3"/><line x1="831.26" y1="735.24" x2="832.32" y2="734.18" stroke="#454545" stroke-width="1.3"/><circle cx="823.1" cy="743.3" r="1.7" fill="none" stroke="#454545" stroke-width="1.2"/><line x1="824.67" y1="743.95" x2="825.87" y2="744.45" stroke="#454545" stroke-width="0.9"/><line x1="823.75" y1="744.87" x2="824.25" y2="746.07" stroke="#454545" stroke-width="0.9"/><line x1="822.45" y1="744.87" x2="821.95" y2="746.07" stroke="#454545" stroke-width="0.9"/><line x1="821.53" y1="743.95" x2="820.33" y2="744.45" stroke="#454545" stroke-width="0.9"/><line x1="821.53" y1="742.65" x2="820.33" y2="742.15" stroke="#454545" stroke-width="0.9"/><line x1="822.45" y1="741.73" x2="821.95" y2="740.53" stroke="#454545" stroke-width="0.9"/><line x1="823.75" y1="741.73" x2="824.25" y2="740.53" stroke="#454545" stroke-width="0.9"/><line x1="824.67" y1="742.65" x2="825.87" y2="742.15" stroke="#454545" stroke-width="0.9"/>
<circle cx="829" cy="768.5" r="3.1" fill="none" stroke="#454545" stroke-width="1.8"/><line x1="832.20" y1="768.50" x2="833.70" y2="768.50" stroke="#454545" stroke-width="1.3"/><line x1="831.26" y1="770.76" x2="832.32" y2="771.82" stroke="#454545" stroke-width="1.3"/><line x1="829.00" y1="771.70" x2="829.00" y2="773.20" stroke="#454545" stroke-width="1.3"/><line x1="826.74" y1="770.76" x2="825.68" y2="771.82" stroke="#454545" stroke-width="1.3"/><line x1="825.80" y1="768.50" x2="824.30" y2="768.50" stroke="#454545" stroke-width="1.3"/><line x1="826.74" y1="766.24" x2="825.68" y2="765.18" stroke="#454545" stroke-width="1.3"/><line x1="829.00" y1="765.30" x2="829.00" y2="763.80" stroke="#454545" stroke-width="1.3"/><line x1="831.26" y1="766.24" x2="832.32" y2="765.18" stroke="#454545" stroke-width="1.3"/><circle cx="823.1" cy="774.3" r="1.7" fill="none" stroke="#454545" stroke-width="1.2"/><line x1="824.67" y1="774.95" x2="825.87" y2="775.45" stroke="#454545" stroke-width="0.9"/><line x1="823.75" y1="775.87" x2="824.25" y2="777.07" stroke="#454545" stroke-width="0.9"/><line x1="822.45" y1="775.87" x2="821.95" y2="777.07" stroke="#454545" stroke-width="0.9"/><line x1="821.53" y1="774.95" x2="820.33" y2="775.45" stroke="#454545" stroke-width="0.9"/><line x1="821.53" y1="773.65" x2="820.33" y2="773.15" stroke="#454545" stroke-width="0.9"/><line x1="822.45" y1="772.73" x2="821.95" y2="771.53" stroke="#454545" stroke-width="0.9"/><line x1="823.75" y1="772.73" x2="824.25" y2="771.53" stroke="#454545" stroke-width="0.9"/><line x1="824.67" y1="773.65" x2="825.87" y2="773.15" stroke="#454545" stroke-width="0.9"/>
<circle cx="829" cy="799.5" r="3.1" fill="none" stroke="#454545" stroke-width="1.8"/><line x1="832.20" y1="799.50" x2="833.70" y2="799.50" stroke="#454545" stroke-width="1.3"/><line x1="831.26" y1="801.76" x2="832.32" y2="802.82" stroke="#454545" stroke-width="1.3"/><line x1="829.00" y1="802.70" x2="829.00" y2="804.20" stroke="#454545" stroke-width="1.3"/><line x1="826.74" y1="801.76" x2="825.68" y2="802.82" stroke="#454545" stroke-width="1.3"/><line x1="825.80" y1="799.50" x2="824.30" y2="799.50" stroke="#454545" stroke-width="1.3"/><line x1="826.74" y1="797.24" x2="825.68" y2="796.18" stroke="#454545" stroke-width="1.3"/><line x1="829.00" y1="796.30" x2="829.00" y2="794.80" stroke="#454545" stroke-width="1.3"/><line x1="831.26" y1="797.24" x2="832.32" y2="796.18" stroke="#454545" stroke-width="1.3"/><circle cx="823.1" cy="805.3" r="1.7" fill="none" stroke="#454545" stroke-width="1.2"/><line x1="824.67" y1="805.95" x2="825.87" y2="806.45" stroke="#454545" stroke-width="0.9"/><line x1="823.75" y1="806.87" x2="824.25" y2="808.07" stroke="#454545" stroke-width="0.9"/><line x1="822.45" y1="806.87" x2="821.95" y2="808.07" stroke="#454545" stroke-width="0.9"/><line x1="821.53" y1="805.95" x2="820.33" y2="806.45" stroke="#454545" stroke-width="0.9"/><line x1="821.53" y1="804.65" x2="820.33" y2="804.15" stroke="#454545" stroke-width="0.9"/><line x1="822.45" y1="803.73" x2="821.95" y2="802.53" stroke="#454545" stroke-width="0.9"/><line x1="823.75" y1="803.73" x2="824.25" y2="802.53" stroke="#454545" stroke-width="0.9"/><line x1="824.67" y1="804.65" x2="825.87" y2="804.15" stroke="#454545" stroke-width="0.9"/>
<circle cx="829" cy="830.5" r="3.1" fill="none" stroke="#454545" stroke-width="1.8"/><line x1="832.20" y1="830.50" x2="833.70" y2="830.50" stroke="#454545" stroke-width="1.3"/><line x1="831.26" y1="832.76" x2="832.32" y2="833.82" stroke="#454545" stroke-width="1.3"/><line x1="829.00" y1="833.70" x2="829.00" y2="835.20" stroke="#454545" stroke-width="1.3"/><line x1="826.74" y1="832.76" x2="825.68" y2="833.82" stroke="#454545" stroke-width="1.3"/><line x1="825.80" y1="830.50" x2="824.30" y2="830.50" stroke="#454545" stroke-width="1.3"/><line x1="826.74" y1="828.24" x2="825.68" y2="827.18" stroke="#454545" stroke-width="1.3"/><line x1="829.00" y1="827.30" x2="829.00" y2="825.80" stroke="#454545" stroke-width="1.3"/><line x1="831.26" y1="828.24" x2="832.32" y2="827.18" stroke="#454545" stroke-width="1.3"/><circle cx="823.1" cy="836.3" r="1.7" fill="none" stroke="#454545" stroke-width="1.2"/><line x1="824.67" y1="836.95" x2="825.87" y2="837.45" stroke="#454545" stroke-width="0.9"/><line x1="823.75" y1="837.87" x2="824.25" y2="839.07" stroke="#454545" stroke-width="0.9"/><line x1="822.45" y1="837.87" x2="821.95" y2="839.07" stroke="#454545" stroke-width="0.9"/><line x1="821.53" y1="836.95" x2="820.33" y2="837.45" stroke="#454545" stroke-width="0.9"/><line x1="821.53" y1="835.65" x2="820.33" y2="835.15" stroke="#454545" stroke-width="0.9"/><line x1="822.45" y1="834.73" x2="821.95" y2="833.53" stroke="#454545" stroke-width="0.9"/><line x1="823.75" y1="834.73" x2="824.25" y2="833.53" stroke="#454545" stroke-width="0.9"/><line x1="824.67" y1="835.65" x2="825.87" y2="835.15" stroke="#454545" stroke-width="0.9"/>
<path d="M256.5,613.5 L260.25,609 L264.0,613.5 Z" fill="#c9c9c9"/><path d="M256.5,615 L260.25,619.5 L264.0,615 Z" fill="#c9c9c9"/>
<path d="M341,643.5 L344.75,639 L348.5,643.5 Z" fill="#c9c9c9"/><path d="M341,645 L344.75,649.5 L348.5,645 Z" fill="#c9c9c9"/>
<path d="M425,629.5 L428.75,625 L432.5,629.5 Z" fill="#c9c9c9"/><path d="M425,631 L428.75,635.5 L432.5,631 Z" fill="#c9c9c9"/>
<path d="M583,613.5 L586.75,609 L590.5,613.5 Z" fill="#c9c9c9"/><path d="M583,615 L586.75,619.5 L590.5,615 Z" fill="#c9c9c9"/>
<path d="M742.5,613.5 L746.25,609 L750.0,613.5 Z" fill="#c9c9c9"/><path d="M742.5,615 L746.25,619.5 L750.0,615 Z" fill="#c9c9c9"/>
<path d="M112.8,616.5 L120,616.5 L116.4,620.5 Z" fill="#1c2533"/>
</svg>
</body></html>
